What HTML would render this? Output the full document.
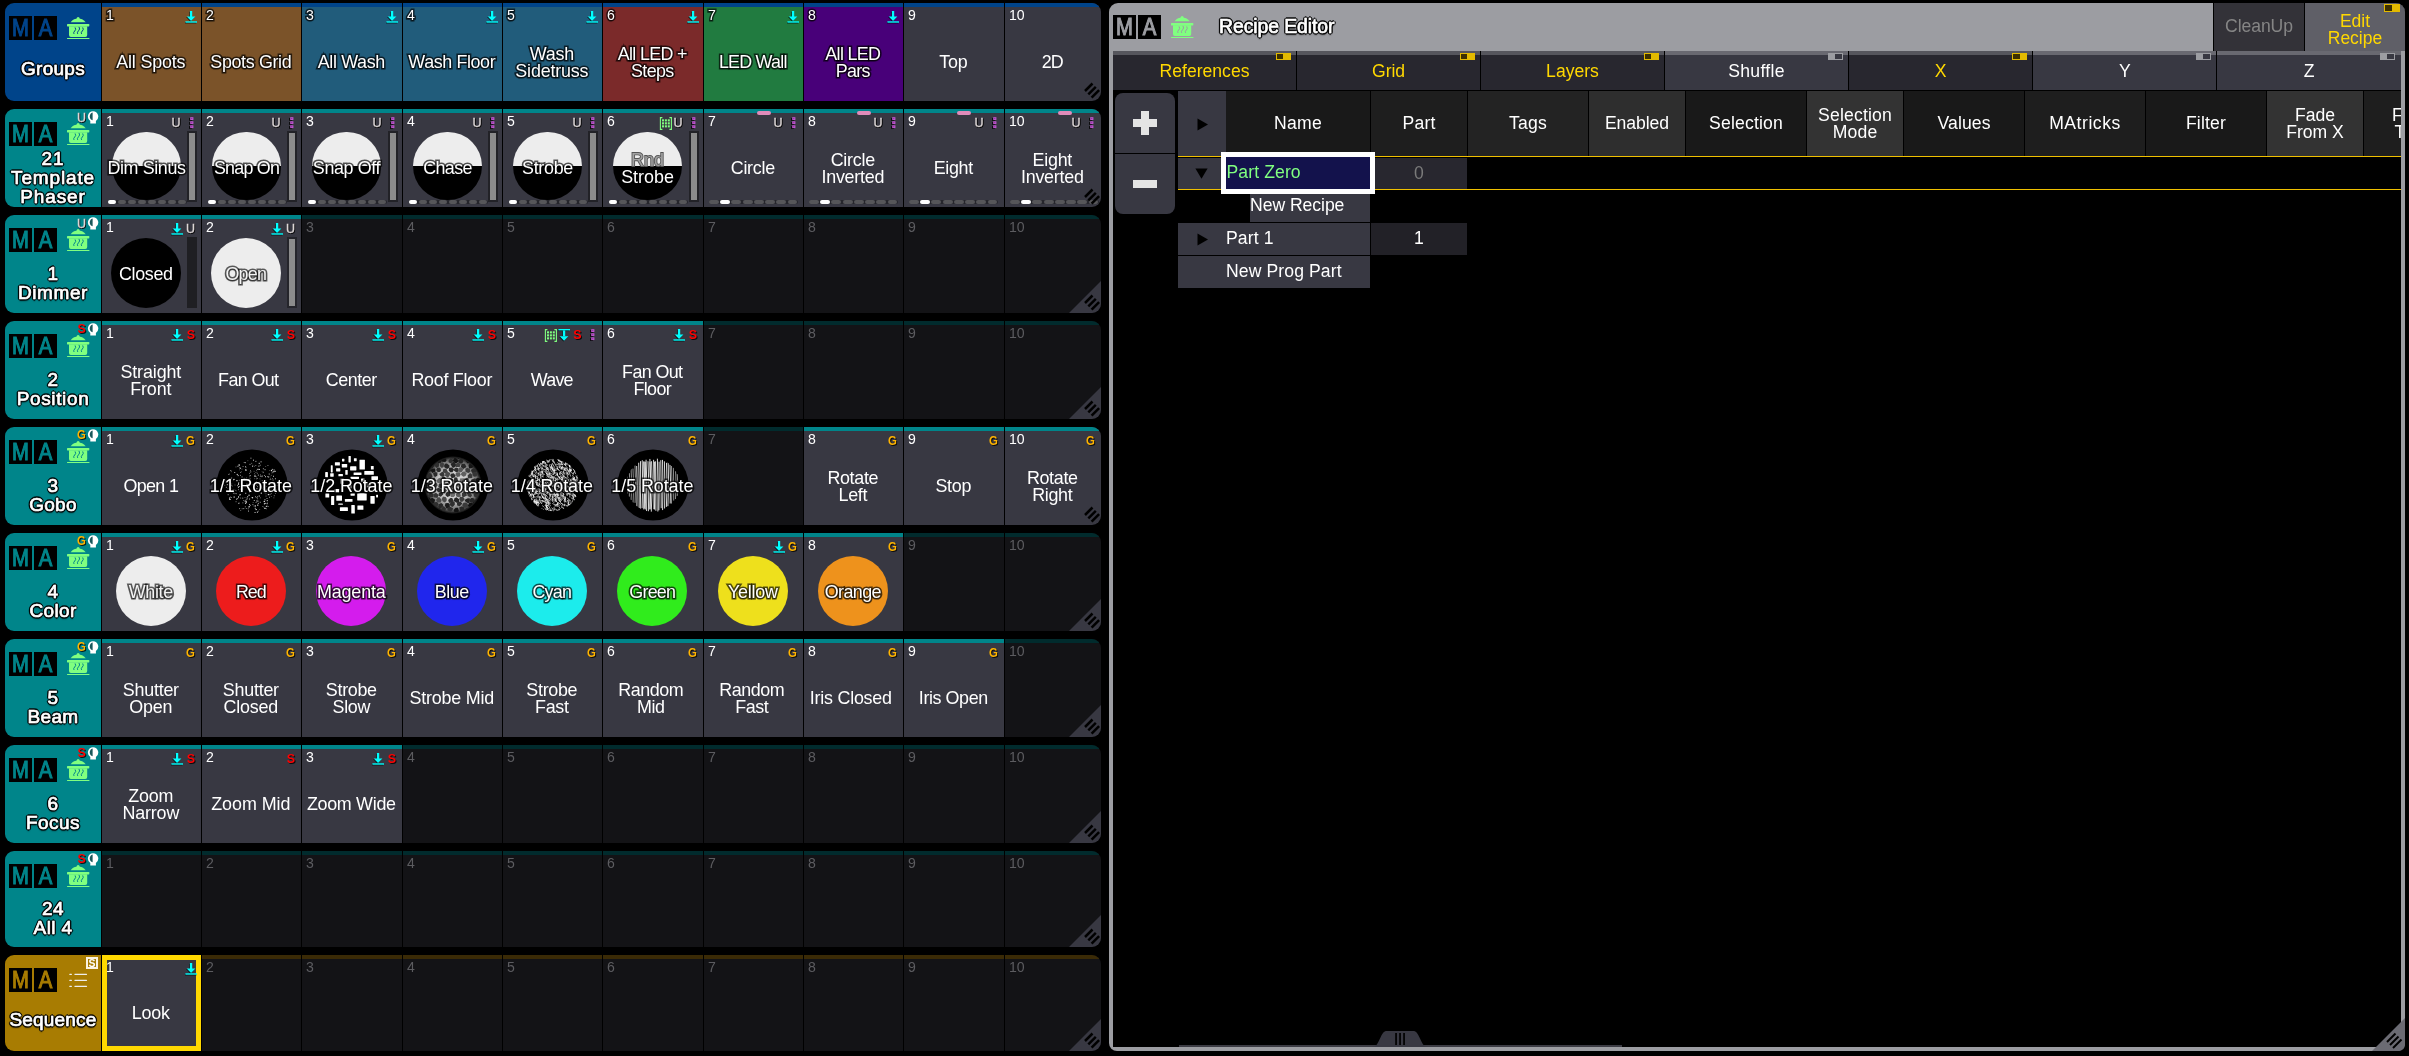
<!DOCTYPE html>
<html lang="en"><head><meta charset="utf-8"><title>grandMA3 - Recipe Editor</title>
<style>
*{margin:0;padding:0;box-sizing:border-box}
html,body{width:2409px;height:1056px;background:#000;overflow:hidden}
body{position:relative;font-family:"Liberation Sans",sans-serif;color:#fff}
#w{position:absolute;left:0;top:0;width:2409px;height:1056px;overflow:hidden;will-change:transform}
.a{position:absolute}
.t{position:absolute;left:5px;width:96px;border-radius:9px 0 0 9px}
.c{position:absolute;overflow:hidden}
.s{position:absolute;left:0;right:0;top:0;height:4px}
.n{position:absolute;left:4px;top:4.5px;font-size:15.3px;line-height:14px;white-space:nowrap;transform:scaleX(.92);transform-origin:0 0}
.ne{color:#5c5c60}
.o{paint-order:stroke fill;-webkit-text-stroke:3.2px rgba(0,0,0,.66);text-shadow:0 .5px 1.5px rgba(0,0,0,.6)}
.l{position:absolute;left:-10.7px;right:-9.3px;display:flex;align-items:center;justify-content:center;text-align:center;font-size:17.9px;line-height:17px;height:60px;white-space:pre;color:#fff}
.tl{position:absolute;left:0;width:96px;text-align:center;font-size:19px;line-height:19px;white-space:pre;color:#fff;-webkit-text-stroke:.7px #fff;text-shadow:-1.2px -1.2px .5px rgba(0,0,0,.8),1.2px -1.2px .5px rgba(0,0,0,.8),-1.2px 1.2px .5px rgba(0,0,0,.8),1.2px 1.2px .5px rgba(0,0,0,.8),0 1.7px .8px rgba(0,0,0,.75),-1.7px 0 .6px rgba(0,0,0,.7),1.7px 0 .6px rgba(0,0,0,.7),0 -1.6px .6px rgba(0,0,0,.7),0 2px 2px rgba(0,0,0,.4)}
.ma{position:absolute;left:4px;top:13px;width:48px;height:24px}
.ma b{position:absolute;top:0;width:23px;height:24px;background:#000;font-weight:400;font-size:23.6px;line-height:24.5px;text-align:center;overflow:hidden;-webkit-text-stroke:1.05px currentColor}
.ma b span{display:block;transform:scaleX(.86)}
.ma b+b{left:25px}
.ic{position:absolute;font-weight:700;font-size:12.5px;line-height:12px;white-space:nowrap}
.u{color:#dcd6d6;font-weight:400;font-size:12.5px;-webkit-text-stroke:.35px #dcd6d6;text-shadow:1px 1px .5px rgba(0,0,0,.8),0 1px .5px rgba(0,0,0,.6),1px 0 .5px rgba(0,0,0,.6)}
.g{color:#ffb400;font-weight:700;font-size:12.6px;transform:scaleX(.9);transform-origin:100% 50%;text-shadow:1px 1px 0 rgba(0,0,0,.8)}
.r{color:#ff0000;text-shadow:1px 1px 0 rgba(0,0,0,.8);font-size:12.5px}
.circ{position:absolute;border-radius:50%}
.fd{position:absolute;top:22px;width:10px;height:71px;background:#222227}
.fd i{position:absolute;left:1.6px;right:2px;top:2px;bottom:2px;background:#8c8c8c}
.st{position:absolute;top:90.6px;height:4.7px;display:flex;gap:1.3px;background:#26262c;border-radius:2.3px}
.st i{flex:1;background:#565659;border-radius:2px}
.st i.w{background:#fff}
.pill{position:absolute;left:53px;top:1.5px;width:14px;height:4.5px;border-radius:2.5px;background:#e08cba}
.hd{position:absolute;top:91px;height:65px;display:flex;align-items:center;justify-content:center;text-align:center;font-size:17.6px;line-height:17px;white-space:pre;color:#fff}
.tb{position:absolute;top:51px;height:39px;width:183px;font-size:17.6px;line-height:33.6px;padding-top:4px;text-align:center}
.tb:before{content:"";position:absolute;left:0;right:0;top:0;height:4px}
.tb.on{background:#28272f;color:#ffd800}
.tb.on:before{background:#56565d}
.tb.off{background:#383842;color:#fff}
.tb.off:before{background:#696971}
.tg{position:absolute;width:15.6px;height:7.8px;border:1.2px solid #e3ba00;background:linear-gradient(90deg,#3d3000 0 50%,#e3ba00 50% 100%)}
.tg.x{border-color:#9c9da2;background:linear-gradient(90deg,#9c9da2 0 50%,#383842 50% 100%)}
.rw{position:absolute;height:32px;font-size:17.6px;line-height:31px;white-space:nowrap;color:#fff}
</style></head>
<body><div id="w">
<div class="t" style="top:3px;height:98px;background:#00448a"><div class="ma" style="left:4px;top:13px;color:#00448a"><b><span>M</span></b><b><span>A</span></b></div><svg class="a" style="left:62px;top:13.7px" width="22.5" height="22.5" viewBox="0 0 22.5 22.5"><g fill="#80ff80"><circle cx="11.1" cy="1.5" r="1.5"/><path d="M3.6 5.3 C5.5 2.6 8.5 1.6 11.1 1.6 C13.7 1.6 16.7 2.6 18.7 5.3 Z"/><rect x="0" y="7" width="22.3" height="2.4" rx=".6"/><path d="M2 9.3 H20.2 V18 Q20.2 19.9 18.3 19.9 H3.9 Q2 19.9 2 18 Z"/><rect x="0" y="20.9" width="22.5" height="1.6" rx=".5"/></g><g fill="none" stroke="#00448a" stroke-width="1" stroke-linecap="round"><path d="M8.3 10.8 q1.2 1.8 -.6 3.2 q-1.6 1.3 -.9 2.6"/><path d="M12.2 10.2 q1.3 1.9 -.7 3.6 q-1.7 1.4 -1 2.8"/><path d="M15.9 10.8 q1.2 1.8 -.6 3.2 q-1.6 1.3 -.9 2.6"/></g></svg><div class="tl" style="top:56.2px;letter-spacing:0.29px;">Groups</div></div>
<div class="c" style="left:102px;top:3px;width:99px;height:98px;background:#7b5329"><div class="s" style="background:#00448a"></div><div class="n o">1</div><svg class="a" style="right:3px;top:8px" width="13" height="13" viewBox="0 0 13 13"><g fill="#000" opacity=".75" transform="translate(-.6,.7)"><rect x="4.9" y="0" width="2.3" height="6"/><path d="M1.7 5.4H10.4L6.05 10.1Z"/><rect x=".4" y="10.3" width="11.6" height="1.4"/></g><g fill="#00ffff"><rect x="4.9" y="0" width="2.3" height="6"/><path d="M1.7 5.4H10.4L6.05 10.1Z"/><rect x=".4" y="10.3" width="11.6" height="1.4"/></g></svg><div class="l o" style="top:29px;letter-spacing:-0.18px;">All Spots</div></div>
<div class="c" style="left:202px;top:3px;width:99px;height:98px;background:#7b5329"><div class="s" style="background:#00448a"></div><div class="n o">2</div><div class="l o" style="top:29px;letter-spacing:-0.36px;">Spots Grid</div></div>
<div class="c" style="left:302px;top:3px;width:100px;height:98px;background:#215c7b"><div class="s" style="background:#00448a"></div><div class="n o">3</div><svg class="a" style="right:3px;top:8px" width="13" height="13" viewBox="0 0 13 13"><g fill="#000" opacity=".75" transform="translate(-.6,.7)"><rect x="4.9" y="0" width="2.3" height="6"/><path d="M1.7 5.4H10.4L6.05 10.1Z"/><rect x=".4" y="10.3" width="11.6" height="1.4"/></g><g fill="#00ffff"><rect x="4.9" y="0" width="2.3" height="6"/><path d="M1.7 5.4H10.4L6.05 10.1Z"/><rect x=".4" y="10.3" width="11.6" height="1.4"/></g></svg><div class="l o" style="top:29px;letter-spacing:-0.35px;">All Wash</div></div>
<div class="c" style="left:403px;top:3px;width:99px;height:98px;background:#215c7b"><div class="s" style="background:#00448a"></div><div class="n o">4</div><svg class="a" style="right:3px;top:8px" width="13" height="13" viewBox="0 0 13 13"><g fill="#000" opacity=".75" transform="translate(-.6,.7)"><rect x="4.9" y="0" width="2.3" height="6"/><path d="M1.7 5.4H10.4L6.05 10.1Z"/><rect x=".4" y="10.3" width="11.6" height="1.4"/></g><g fill="#00ffff"><rect x="4.9" y="0" width="2.3" height="6"/><path d="M1.7 5.4H10.4L6.05 10.1Z"/><rect x=".4" y="10.3" width="11.6" height="1.4"/></g></svg><div class="l o" style="top:29px;letter-spacing:-0.39px;">Wash Floor</div></div>
<div class="c" style="left:503px;top:3px;width:99px;height:98px;background:#215c7b"><div class="s" style="background:#00448a"></div><div class="n o">5</div><svg class="a" style="right:3px;top:8px" width="13" height="13" viewBox="0 0 13 13"><g fill="#000" opacity=".75" transform="translate(-.6,.7)"><rect x="4.9" y="0" width="2.3" height="6"/><path d="M1.7 5.4H10.4L6.05 10.1Z"/><rect x=".4" y="10.3" width="11.6" height="1.4"/></g><g fill="#00ffff"><rect x="4.9" y="0" width="2.3" height="6"/><path d="M1.7 5.4H10.4L6.05 10.1Z"/><rect x=".4" y="10.3" width="11.6" height="1.4"/></g></svg><div class="l o" style="top:29px;padding-top:1.8px;letter-spacing:-0.19px;">Wash
Sidetruss</div></div>
<div class="c" style="left:603px;top:3px;width:100px;height:98px;background:#7b2a2a"><div class="s" style="background:#00448a"></div><div class="n o">6</div><svg class="a" style="right:3px;top:8px" width="13" height="13" viewBox="0 0 13 13"><g fill="#000" opacity=".75" transform="translate(-.6,.7)"><rect x="4.9" y="0" width="2.3" height="6"/><path d="M1.7 5.4H10.4L6.05 10.1Z"/><rect x=".4" y="10.3" width="11.6" height="1.4"/></g><g fill="#00ffff"><rect x="4.9" y="0" width="2.3" height="6"/><path d="M1.7 5.4H10.4L6.05 10.1Z"/><rect x=".4" y="10.3" width="11.6" height="1.4"/></g></svg><div class="l o" style="top:29px;padding-top:1.8px;letter-spacing:-0.66px;">All LED +
Steps</div></div>
<div class="c" style="left:704px;top:3px;width:99px;height:98px;background:#217b40"><div class="s" style="background:#00448a"></div><div class="n o">7</div><svg class="a" style="right:3px;top:8px" width="13" height="13" viewBox="0 0 13 13"><g fill="#000" opacity=".75" transform="translate(-.6,.7)"><rect x="4.9" y="0" width="2.3" height="6"/><path d="M1.7 5.4H10.4L6.05 10.1Z"/><rect x=".4" y="10.3" width="11.6" height="1.4"/></g><g fill="#00ffff"><rect x="4.9" y="0" width="2.3" height="6"/><path d="M1.7 5.4H10.4L6.05 10.1Z"/><rect x=".4" y="10.3" width="11.6" height="1.4"/></g></svg><div class="l o" style="top:29px;letter-spacing:-0.76px;">LED Wall</div></div>
<div class="c" style="left:804px;top:3px;width:99px;height:98px;background:#480079"><div class="s" style="background:#00448a"></div><div class="n o">8</div><svg class="a" style="right:3px;top:8px" width="13" height="13" viewBox="0 0 13 13"><g fill="#000" opacity=".75" transform="translate(-.6,.7)"><rect x="4.9" y="0" width="2.3" height="6"/><path d="M1.7 5.4H10.4L6.05 10.1Z"/><rect x=".4" y="10.3" width="11.6" height="1.4"/></g><g fill="#00ffff"><rect x="4.9" y="0" width="2.3" height="6"/><path d="M1.7 5.4H10.4L6.05 10.1Z"/><rect x=".4" y="10.3" width="11.6" height="1.4"/></g></svg><div class="l o" style="top:29px;padding-top:1.8px;letter-spacing:-0.68px;">All LED
Pars</div></div>
<div class="c" style="left:904px;top:3px;width:100px;height:98px;background:#383842"><div class="s" style="background:#00448a"></div><div class="n">9</div><div class="l" style="top:29px;letter-spacing:-0.23px;">Top</div></div>
<div class="c" style="left:1005px;top:3px;width:96px;height:98px;background:#383842;border-radius:0 9px 9px 0"><div class="s" style="background:#00448a"></div><div class="n">10</div><div class="l" style="top:29px;letter-spacing:-0.81px;">2D</div><svg class="a" style="right:0;bottom:0" width="32" height="32" viewBox="0 0 32 32"><g stroke="#000" stroke-width="2.5"><path d="M16 22L23.5 14.5"/><path d="M19.3 25.3L26.8 17.8"/><path d="M22.6 28.6L30.1 21.1"/></g></svg></div>
<div class="t" style="top:109px;height:98px;background:#00858a"><div class="ma" style="left:4px;top:13px;color:#00858a"><b><span>M</span></b><b><span>A</span></b></div><svg class="a" style="left:62px;top:13.7px" width="22.5" height="22.5" viewBox="0 0 22.5 22.5"><g fill="#80ff80"><circle cx="11.1" cy="1.5" r="1.5"/><path d="M3.6 5.3 C5.5 2.6 8.5 1.6 11.1 1.6 C13.7 1.6 16.7 2.6 18.7 5.3 Z"/><rect x="0" y="7" width="22.3" height="2.4" rx=".6"/><path d="M2 9.3 H20.2 V18 Q20.2 19.9 18.3 19.9 H3.9 Q2 19.9 2 18 Z"/><rect x="0" y="20.9" width="22.5" height="1.6" rx=".5"/></g><g fill="none" stroke="#00858a" stroke-width="1" stroke-linecap="round"><path d="M8.3 10.8 q1.2 1.8 -.6 3.2 q-1.6 1.3 -.9 2.6"/><path d="M12.2 10.2 q1.3 1.9 -.7 3.6 q-1.7 1.4 -1 2.8"/><path d="M15.9 10.8 q1.2 1.8 -.6 3.2 q-1.6 1.3 -.9 2.6"/></g></svg><div class="ic u" style="left:72px;top:2.5px">U</div><svg class="a" style="left:81.6px;top:1.6px" width="12" height="13" viewBox="0 0 12 13"><path d="M6 .2A5.3 5.3 0 0 1 8.9 9.9V12.6H3.3V9.9A5.3 5.3 0 0 1 6 .2Z" fill="#fff"/><path d="M5.6 1.5A4.1 4.1 0 0 0 5.6 9.3Z" fill="rgba(0,70,73,.9)"/></svg><div class="tl" style="top:39.9px;letter-spacing:0.85px;">21
Template
Phaser</div></div>
<div class="c" style="left:102px;top:109px;width:99px;height:98px;background:#383842"><div class="s" style="background:#00858a"></div><div class="n">1</div><div class="circ" style="left:10.4px;top:22.6px;width:68.2px;height:68.2px;background:linear-gradient(#ededed 0 50.6%,#000 50.6% 100%)"></div><div class="fd" style="right:4px;width:9.6px"><i></i></div><div class="st" style="left:5.5px;width:79px"><i class="w"></i><i></i><i></i><i></i><i></i><i></i><i></i><i></i></div><svg class="a" style="right:7px;top:8px" width="5" height="12" viewBox="0 0 5 12"><rect x="0" y="1.00" width="3.2" height="2.8" fill="#000" opacity=".8"/><rect x="1.2" y="0.20" width="3.2" height="2.8" fill="#c455d4"/><rect x="2.3" y="1.20" width="1" height=".9" fill="#6a2e74"/><rect x="0" y="5.05" width="3.2" height="2.8" fill="#000" opacity=".8"/><rect x="1.2" y="4.25" width="3.2" height="2.8" fill="#c455d4"/><rect x="2.3" y="5.25" width="1" height=".9" fill="#6a2e74"/><rect x="0" y="9.10" width="3.2" height="2.8" fill="#000" opacity=".8"/><rect x="1.2" y="8.30" width="3.2" height="2.8" fill="#c455d4"/><rect x="2.3" y="9.30" width="1" height=".9" fill="#6a2e74"/></svg><div class="ic u" style="right:20.5px;top:7.8px">U</div><div class="l o" style="top:29px;letter-spacing:-0.38px;left:-5.5px;right:auto;width:100px">Dim Sinus</div></div>
<div class="c" style="left:202px;top:109px;width:99px;height:98px;background:#383842"><div class="s" style="background:#00858a"></div><div class="n">2</div><div class="circ" style="left:10.4px;top:22.6px;width:68.2px;height:68.2px;background:linear-gradient(#ededed 0 50.6%,#000 50.6% 100%)"></div><div class="fd" style="right:4px;width:9.6px"><i></i></div><div class="st" style="left:5.5px;width:79px"><i class="w"></i><i></i><i></i><i></i><i></i><i></i><i></i><i></i></div><svg class="a" style="right:7px;top:8px" width="5" height="12" viewBox="0 0 5 12"><rect x="0" y="1.00" width="3.2" height="2.8" fill="#000" opacity=".8"/><rect x="1.2" y="0.20" width="3.2" height="2.8" fill="#c455d4"/><rect x="2.3" y="1.20" width="1" height=".9" fill="#6a2e74"/><rect x="0" y="5.05" width="3.2" height="2.8" fill="#000" opacity=".8"/><rect x="1.2" y="4.25" width="3.2" height="2.8" fill="#c455d4"/><rect x="2.3" y="5.25" width="1" height=".9" fill="#6a2e74"/><rect x="0" y="9.10" width="3.2" height="2.8" fill="#000" opacity=".8"/><rect x="1.2" y="8.30" width="3.2" height="2.8" fill="#c455d4"/><rect x="2.3" y="9.30" width="1" height=".9" fill="#6a2e74"/></svg><div class="ic u" style="right:20.5px;top:7.8px">U</div><div class="l o" style="top:29px;letter-spacing:-0.77px;left:-5.5px;right:auto;width:100px">Snap On</div></div>
<div class="c" style="left:302px;top:109px;width:100px;height:98px;background:#383842"><div class="s" style="background:#00858a"></div><div class="n">3</div><div class="circ" style="left:10.4px;top:22.6px;width:68.2px;height:68.2px;background:linear-gradient(#ededed 0 50.6%,#000 50.6% 100%)"></div><div class="fd" style="right:4px;width:9.6px"><i></i></div><div class="st" style="left:5.5px;width:79px"><i class="w"></i><i></i><i></i><i></i><i></i><i></i><i></i><i></i></div><svg class="a" style="right:7px;top:8px" width="5" height="12" viewBox="0 0 5 12"><rect x="0" y="1.00" width="3.2" height="2.8" fill="#000" opacity=".8"/><rect x="1.2" y="0.20" width="3.2" height="2.8" fill="#c455d4"/><rect x="2.3" y="1.20" width="1" height=".9" fill="#6a2e74"/><rect x="0" y="5.05" width="3.2" height="2.8" fill="#000" opacity=".8"/><rect x="1.2" y="4.25" width="3.2" height="2.8" fill="#c455d4"/><rect x="2.3" y="5.25" width="1" height=".9" fill="#6a2e74"/><rect x="0" y="9.10" width="3.2" height="2.8" fill="#000" opacity=".8"/><rect x="1.2" y="8.30" width="3.2" height="2.8" fill="#c455d4"/><rect x="2.3" y="9.30" width="1" height=".9" fill="#6a2e74"/></svg><div class="ic u" style="right:20.5px;top:7.8px">U</div><div class="l o" style="top:29px;letter-spacing:-0.37px;left:-5.5px;right:auto;width:100px">Snap Off</div></div>
<div class="c" style="left:403px;top:109px;width:99px;height:98px;background:#383842"><div class="s" style="background:#00858a"></div><div class="n">4</div><div class="circ" style="left:10.4px;top:22.6px;width:68.2px;height:68.2px;background:linear-gradient(#ededed 0 50.6%,#000 50.6% 100%)"></div><div class="fd" style="right:4px;width:9.6px"><i></i></div><div class="st" style="left:5.5px;width:79px"><i class="w"></i><i></i><i></i><i></i><i></i><i></i><i></i><i></i></div><svg class="a" style="right:7px;top:8px" width="5" height="12" viewBox="0 0 5 12"><rect x="0" y="1.00" width="3.2" height="2.8" fill="#000" opacity=".8"/><rect x="1.2" y="0.20" width="3.2" height="2.8" fill="#c455d4"/><rect x="2.3" y="1.20" width="1" height=".9" fill="#6a2e74"/><rect x="0" y="5.05" width="3.2" height="2.8" fill="#000" opacity=".8"/><rect x="1.2" y="4.25" width="3.2" height="2.8" fill="#c455d4"/><rect x="2.3" y="5.25" width="1" height=".9" fill="#6a2e74"/><rect x="0" y="9.10" width="3.2" height="2.8" fill="#000" opacity=".8"/><rect x="1.2" y="8.30" width="3.2" height="2.8" fill="#c455d4"/><rect x="2.3" y="9.30" width="1" height=".9" fill="#6a2e74"/></svg><div class="ic u" style="right:20.5px;top:7.8px">U</div><div class="l o" style="top:29px;letter-spacing:-0.60px;left:-5.5px;right:auto;width:100px">Chase</div></div>
<div class="c" style="left:503px;top:109px;width:99px;height:98px;background:#383842"><div class="s" style="background:#00858a"></div><div class="n">5</div><div class="circ" style="left:10.4px;top:22.6px;width:68.2px;height:68.2px;background:linear-gradient(#ededed 0 50.6%,#000 50.6% 100%)"></div><div class="fd" style="right:4px;width:9.6px"><i></i></div><div class="st" style="left:5.5px;width:79px"><i class="w"></i><i></i><i></i><i></i><i></i><i></i><i></i><i></i></div><svg class="a" style="right:7px;top:8px" width="5" height="12" viewBox="0 0 5 12"><rect x="0" y="1.00" width="3.2" height="2.8" fill="#000" opacity=".8"/><rect x="1.2" y="0.20" width="3.2" height="2.8" fill="#c455d4"/><rect x="2.3" y="1.20" width="1" height=".9" fill="#6a2e74"/><rect x="0" y="5.05" width="3.2" height="2.8" fill="#000" opacity=".8"/><rect x="1.2" y="4.25" width="3.2" height="2.8" fill="#c455d4"/><rect x="2.3" y="5.25" width="1" height=".9" fill="#6a2e74"/><rect x="0" y="9.10" width="3.2" height="2.8" fill="#000" opacity=".8"/><rect x="1.2" y="8.30" width="3.2" height="2.8" fill="#c455d4"/><rect x="2.3" y="9.30" width="1" height=".9" fill="#6a2e74"/></svg><div class="ic u" style="right:20.5px;top:7.8px">U</div><div class="l o" style="top:29px;letter-spacing:-0.30px;left:-5.5px;right:auto;width:100px">Strobe</div></div>
<div class="c" style="left:603px;top:109px;width:100px;height:98px;background:#383842"><div class="s" style="background:#00858a"></div><div class="n">6</div><div class="circ" style="left:10.4px;top:22.6px;width:68.2px;height:68.2px;background:linear-gradient(#ededed 0 50.6%,#000 50.6% 100%)"></div><div class="fd" style="right:4px;width:9.6px"><i></i></div><div class="st" style="left:5.5px;width:79px"><i class="w"></i><i></i><i></i><i></i><i></i><i></i><i></i><i></i></div><svg class="a" style="right:7px;top:8px" width="5" height="12" viewBox="0 0 5 12"><rect x="0" y="1.00" width="3.2" height="2.8" fill="#000" opacity=".8"/><rect x="1.2" y="0.20" width="3.2" height="2.8" fill="#c455d4"/><rect x="2.3" y="1.20" width="1" height=".9" fill="#6a2e74"/><rect x="0" y="5.05" width="3.2" height="2.8" fill="#000" opacity=".8"/><rect x="1.2" y="4.25" width="3.2" height="2.8" fill="#c455d4"/><rect x="2.3" y="5.25" width="1" height=".9" fill="#6a2e74"/><rect x="0" y="9.10" width="3.2" height="2.8" fill="#000" opacity=".8"/><rect x="1.2" y="8.30" width="3.2" height="2.8" fill="#c455d4"/><rect x="2.3" y="9.30" width="1" height=".9" fill="#6a2e74"/></svg><div class="ic u" style="right:20.5px;top:7.8px">U</div><svg class="a" style="right:31.5px;top:7.5px" width="13" height="13" viewBox="0 0 13 13"><g fill="none" stroke="#80ff80" stroke-width="1.1"><path d="M3.4 .6H1.4V12.4H3.4"/><path d="M10.4 .6H12.4V12.4H10.4"/></g><g fill="#80ff80"><rect x="3.0" y="2.3" width="2.0" height="2.1"/><rect x="5.9" y="2.3" width="2.0" height="2.1"/><rect x="8.8" y="2.3" width="2.0" height="2.1"/><rect x="3.0" y="5.3" width="2.0" height="2.1"/><rect x="5.9" y="5.3" width="2.0" height="2.1"/><rect x="8.8" y="5.3" width="2.0" height="2.1"/><rect x="3.0" y="8.3" width="2.0" height="2.1"/><rect x="5.9" y="8.3" width="2.0" height="2.1"/><rect x="8.8" y="8.3" width="2.0" height="2.1"/></g></svg><div class="l" style="top:29px;padding-top:1.8px;left:-5.5px;right:auto;width:100px"><span><span style="color:#a2a2a2;paint-order:stroke fill;-webkit-text-stroke:1.8px #555">Rnd</span>
Strobe</span></div></div>
<div class="c" style="left:704px;top:109px;width:99px;height:98px;background:#383842"><div class="s" style="background:#00858a"></div><div class="n">7</div><div class="pill"></div><div class="st" style="left:5px;width:88.5px"><i></i><i class="w"></i><i></i><i></i><i></i><i></i><i></i><i></i></div><svg class="a" style="right:7px;top:8px" width="5" height="12" viewBox="0 0 5 12"><rect x="0" y="1.00" width="3.2" height="2.8" fill="#000" opacity=".8"/><rect x="1.2" y="0.20" width="3.2" height="2.8" fill="#c455d4"/><rect x="2.3" y="1.20" width="1" height=".9" fill="#6a2e74"/><rect x="0" y="5.05" width="3.2" height="2.8" fill="#000" opacity=".8"/><rect x="1.2" y="4.25" width="3.2" height="2.8" fill="#c455d4"/><rect x="2.3" y="5.25" width="1" height=".9" fill="#6a2e74"/><rect x="0" y="9.10" width="3.2" height="2.8" fill="#000" opacity=".8"/><rect x="1.2" y="8.30" width="3.2" height="2.8" fill="#c455d4"/><rect x="2.3" y="9.30" width="1" height=".9" fill="#6a2e74"/></svg><div class="ic u" style="right:20.5px;top:7.8px">U</div><div class="l" style="top:29px;letter-spacing:-0.27px;">Circle</div></div>
<div class="c" style="left:804px;top:109px;width:99px;height:98px;background:#383842"><div class="s" style="background:#00858a"></div><div class="n">8</div><div class="pill"></div><div class="st" style="left:5px;width:88.5px"><i></i><i class="w"></i><i></i><i></i><i></i><i></i><i></i><i></i></div><svg class="a" style="right:7px;top:8px" width="5" height="12" viewBox="0 0 5 12"><rect x="0" y="1.00" width="3.2" height="2.8" fill="#000" opacity=".8"/><rect x="1.2" y="0.20" width="3.2" height="2.8" fill="#c455d4"/><rect x="2.3" y="1.20" width="1" height=".9" fill="#6a2e74"/><rect x="0" y="5.05" width="3.2" height="2.8" fill="#000" opacity=".8"/><rect x="1.2" y="4.25" width="3.2" height="2.8" fill="#c455d4"/><rect x="2.3" y="5.25" width="1" height=".9" fill="#6a2e74"/><rect x="0" y="9.10" width="3.2" height="2.8" fill="#000" opacity=".8"/><rect x="1.2" y="8.30" width="3.2" height="2.8" fill="#c455d4"/><rect x="2.3" y="9.30" width="1" height=".9" fill="#6a2e74"/></svg><div class="ic u" style="right:20.5px;top:7.8px">U</div><div class="l" style="top:29px;padding-top:1.8px;letter-spacing:-0.24px;">Circle
Inverted</div></div>
<div class="c" style="left:904px;top:109px;width:100px;height:98px;background:#383842"><div class="s" style="background:#00858a"></div><div class="n">9</div><div class="pill"></div><div class="st" style="left:5px;width:88.5px"><i></i><i class="w"></i><i></i><i></i><i></i><i></i><i></i><i></i></div><svg class="a" style="right:7px;top:8px" width="5" height="12" viewBox="0 0 5 12"><rect x="0" y="1.00" width="3.2" height="2.8" fill="#000" opacity=".8"/><rect x="1.2" y="0.20" width="3.2" height="2.8" fill="#c455d4"/><rect x="2.3" y="1.20" width="1" height=".9" fill="#6a2e74"/><rect x="0" y="5.05" width="3.2" height="2.8" fill="#000" opacity=".8"/><rect x="1.2" y="4.25" width="3.2" height="2.8" fill="#c455d4"/><rect x="2.3" y="5.25" width="1" height=".9" fill="#6a2e74"/><rect x="0" y="9.10" width="3.2" height="2.8" fill="#000" opacity=".8"/><rect x="1.2" y="8.30" width="3.2" height="2.8" fill="#c455d4"/><rect x="2.3" y="9.30" width="1" height=".9" fill="#6a2e74"/></svg><div class="ic u" style="right:20.5px;top:7.8px">U</div><div class="l" style="top:29px;letter-spacing:-0.31px;">Eight</div></div>
<div class="c" style="left:1005px;top:109px;width:96px;height:98px;background:#383842;border-radius:0 9px 9px 0"><div class="s" style="background:#00858a"></div><div class="n">10</div><div class="pill"></div><div class="st" style="left:5px;width:88.5px"><i></i><i class="w"></i><i></i><i></i><i></i><i></i><i></i><i></i></div><svg class="a" style="right:7px;top:8px" width="5" height="12" viewBox="0 0 5 12"><rect x="0" y="1.00" width="3.2" height="2.8" fill="#000" opacity=".8"/><rect x="1.2" y="0.20" width="3.2" height="2.8" fill="#c455d4"/><rect x="2.3" y="1.20" width="1" height=".9" fill="#6a2e74"/><rect x="0" y="5.05" width="3.2" height="2.8" fill="#000" opacity=".8"/><rect x="1.2" y="4.25" width="3.2" height="2.8" fill="#c455d4"/><rect x="2.3" y="5.25" width="1" height=".9" fill="#6a2e74"/><rect x="0" y="9.10" width="3.2" height="2.8" fill="#000" opacity=".8"/><rect x="1.2" y="8.30" width="3.2" height="2.8" fill="#c455d4"/><rect x="2.3" y="9.30" width="1" height=".9" fill="#6a2e74"/></svg><div class="ic u" style="right:20.5px;top:7.8px">U</div><div class="l" style="top:29px;padding-top:1.8px;letter-spacing:-0.24px;">Eight
Inverted</div><svg class="a" style="right:0;bottom:0" width="32" height="32" viewBox="0 0 32 32"><g stroke="#000" stroke-width="2.5"><path d="M16 22L23.5 14.5"/><path d="M19.3 25.3L26.8 17.8"/><path d="M22.6 28.6L30.1 21.1"/></g></svg></div>
<div class="t" style="top:215px;height:98px;background:#00858a"><div class="ma" style="left:4px;top:13px;color:#00858a"><b><span>M</span></b><b><span>A</span></b></div><svg class="a" style="left:62px;top:13.7px" width="22.5" height="22.5" viewBox="0 0 22.5 22.5"><g fill="#80ff80"><circle cx="11.1" cy="1.5" r="1.5"/><path d="M3.6 5.3 C5.5 2.6 8.5 1.6 11.1 1.6 C13.7 1.6 16.7 2.6 18.7 5.3 Z"/><rect x="0" y="7" width="22.3" height="2.4" rx=".6"/><path d="M2 9.3 H20.2 V18 Q20.2 19.9 18.3 19.9 H3.9 Q2 19.9 2 18 Z"/><rect x="0" y="20.9" width="22.5" height="1.6" rx=".5"/></g><g fill="none" stroke="#00858a" stroke-width="1" stroke-linecap="round"><path d="M8.3 10.8 q1.2 1.8 -.6 3.2 q-1.6 1.3 -.9 2.6"/><path d="M12.2 10.2 q1.3 1.9 -.7 3.6 q-1.7 1.4 -1 2.8"/><path d="M15.9 10.8 q1.2 1.8 -.6 3.2 q-1.6 1.3 -.9 2.6"/></g></svg><div class="ic u" style="left:72px;top:2.5px">U</div><svg class="a" style="left:81.6px;top:1.6px" width="12" height="13" viewBox="0 0 12 13"><path d="M6 .2A5.3 5.3 0 0 1 8.9 9.9V12.6H3.3V9.9A5.3 5.3 0 0 1 6 .2Z" fill="#fff"/><path d="M5.6 1.5A4.1 4.1 0 0 0 5.6 9.3Z" fill="rgba(0,70,73,.9)"/></svg><div class="tl" style="top:48.9px;letter-spacing:0.59px;">1
Dimmer</div></div>
<div class="c" style="left:102px;top:215px;width:99px;height:98px;background:#383842"><div class="s" style="background:#00858a"></div><div class="n">1</div><div class="circ" style="left:8.8px;top:22.6px;width:70px;height:70px;background:#000"></div><div class="fd" style="right:4px;width:10px;top:22px;height:71px;background:#1f1f23"></div><div class="ic u" style="right:6px;top:7.8px">U</div><svg class="a" style="right:17px;top:8px" width="13" height="13" viewBox="0 0 13 13"><g fill="#000" opacity=".75" transform="translate(-.6,.7)"><rect x="4.9" y="0" width="2.3" height="6"/><path d="M1.7 5.4H10.4L6.05 10.1Z"/><rect x=".4" y="10.3" width="11.6" height="1.4"/></g><g fill="#00ffff"><rect x="4.9" y="0" width="2.3" height="6"/><path d="M1.7 5.4H10.4L6.05 10.1Z"/><rect x=".4" y="10.3" width="11.6" height="1.4"/></g></svg><div class="l" style="top:29px;letter-spacing:-0.34px;left:-6.2px;right:auto;width:100px">Closed</div></div>
<div class="c" style="left:202px;top:215px;width:99px;height:98px;background:#383842"><div class="s" style="background:#00858a"></div><div class="n">2</div><div class="circ" style="left:8.8px;top:22.6px;width:70px;height:70px;background:#ededed"></div><div class="fd" style="right:4px;width:10px;top:22px;height:71px;background:#25252b"><i style="left:2px;right:2px"></i></div><div class="ic u" style="right:6px;top:7.8px">U</div><svg class="a" style="right:17px;top:8px" width="13" height="13" viewBox="0 0 13 13"><g fill="#000" opacity=".75" transform="translate(-.6,.7)"><rect x="4.9" y="0" width="2.3" height="6"/><path d="M1.7 5.4H10.4L6.05 10.1Z"/><rect x=".4" y="10.3" width="11.6" height="1.4"/></g><g fill="#00ffff"><rect x="4.9" y="0" width="2.3" height="6"/><path d="M1.7 5.4H10.4L6.05 10.1Z"/><rect x=".4" y="10.3" width="11.6" height="1.4"/></g></svg><div class="l o" style="top:29px;letter-spacing:-0.78px;left:-6.2px;right:auto;width:100px;color:#f4f4f4;-webkit-text-stroke-color:rgba(0,0,0,.62)">Open</div></div>
<div class="c" style="left:302px;top:215px;width:100px;height:98px;background:#131316"><div class="s" style="background:#012b2d"></div><div class="n ne">3</div></div>
<div class="c" style="left:403px;top:215px;width:99px;height:98px;background:#131316"><div class="s" style="background:#012b2d"></div><div class="n ne">4</div></div>
<div class="c" style="left:503px;top:215px;width:99px;height:98px;background:#131316"><div class="s" style="background:#012b2d"></div><div class="n ne">5</div></div>
<div class="c" style="left:603px;top:215px;width:100px;height:98px;background:#131316"><div class="s" style="background:#012b2d"></div><div class="n ne">6</div></div>
<div class="c" style="left:704px;top:215px;width:99px;height:98px;background:#131316"><div class="s" style="background:#012b2d"></div><div class="n ne">7</div></div>
<div class="c" style="left:804px;top:215px;width:99px;height:98px;background:#131316"><div class="s" style="background:#012b2d"></div><div class="n ne">8</div></div>
<div class="c" style="left:904px;top:215px;width:100px;height:98px;background:#131316"><div class="s" style="background:#012b2d"></div><div class="n ne">9</div></div>
<div class="c" style="left:1005px;top:215px;width:96px;height:98px;background:#131316;border-radius:0 9px 9px 0"><div class="s" style="background:#012b2d"></div><div class="n ne">10</div><svg class="a" style="right:0;bottom:0" width="32" height="32" viewBox="0 0 32 32"><path d="M32 0V32H0Z" fill="#383842"/><g stroke="#000" stroke-width="2.5"><path d="M16 22L23.5 14.5"/><path d="M19.3 25.3L26.8 17.8"/><path d="M22.6 28.6L30.1 21.1"/></g></svg></div>
<div class="t" style="top:321px;height:98px;background:#00858a"><div class="ma" style="left:4px;top:13px;color:#00858a"><b><span>M</span></b><b><span>A</span></b></div><svg class="a" style="left:62px;top:13.7px" width="22.5" height="22.5" viewBox="0 0 22.5 22.5"><g fill="#80ff80"><circle cx="11.1" cy="1.5" r="1.5"/><path d="M3.6 5.3 C5.5 2.6 8.5 1.6 11.1 1.6 C13.7 1.6 16.7 2.6 18.7 5.3 Z"/><rect x="0" y="7" width="22.3" height="2.4" rx=".6"/><path d="M2 9.3 H20.2 V18 Q20.2 19.9 18.3 19.9 H3.9 Q2 19.9 2 18 Z"/><rect x="0" y="20.9" width="22.5" height="1.6" rx=".5"/></g><g fill="none" stroke="#00858a" stroke-width="1" stroke-linecap="round"><path d="M8.3 10.8 q1.2 1.8 -.6 3.2 q-1.6 1.3 -.9 2.6"/><path d="M12.2 10.2 q1.3 1.9 -.7 3.6 q-1.7 1.4 -1 2.8"/><path d="M15.9 10.8 q1.2 1.8 -.6 3.2 q-1.6 1.3 -.9 2.6"/></g></svg><div class="ic r" style="left:72.5px;top:2px">S</div><svg class="a" style="left:81.6px;top:1.6px" width="12" height="13" viewBox="0 0 12 13"><path d="M6 .2A5.3 5.3 0 0 1 8.9 9.9V12.6H3.3V9.9A5.3 5.3 0 0 1 6 .2Z" fill="#fff"/><path d="M5.6 1.5A4.1 4.1 0 0 0 5.6 9.3Z" fill="rgba(0,70,73,.9)"/></svg><div class="tl" style="top:48.9px;letter-spacing:0.64px;">2
Position</div></div>
<div class="c" style="left:102px;top:321px;width:99px;height:98px;background:#383842"><div class="s" style="background:#00858a"></div><div class="n">1</div><div class="ic r" style="right:6px;top:8px">S</div><svg class="a" style="right:17px;top:8px" width="13" height="13" viewBox="0 0 13 13"><g fill="#000" opacity=".75" transform="translate(-.6,.7)"><rect x="4.9" y="0" width="2.3" height="6"/><path d="M1.7 5.4H10.4L6.05 10.1Z"/><rect x=".4" y="10.3" width="11.6" height="1.4"/></g><g fill="#00ffff"><rect x="4.9" y="0" width="2.3" height="6"/><path d="M1.7 5.4H10.4L6.05 10.1Z"/><rect x=".4" y="10.3" width="11.6" height="1.4"/></g></svg><div class="l" style="top:29px;padding-top:1.8px;letter-spacing:-0.11px;">Straight
Front</div></div>
<div class="c" style="left:202px;top:321px;width:99px;height:98px;background:#383842"><div class="s" style="background:#00858a"></div><div class="n">2</div><div class="ic r" style="right:6px;top:8px">S</div><svg class="a" style="right:17px;top:8px" width="13" height="13" viewBox="0 0 13 13"><g fill="#000" opacity=".75" transform="translate(-.6,.7)"><rect x="4.9" y="0" width="2.3" height="6"/><path d="M1.7 5.4H10.4L6.05 10.1Z"/><rect x=".4" y="10.3" width="11.6" height="1.4"/></g><g fill="#00ffff"><rect x="4.9" y="0" width="2.3" height="6"/><path d="M1.7 5.4H10.4L6.05 10.1Z"/><rect x=".4" y="10.3" width="11.6" height="1.4"/></g></svg><div class="l" style="top:29px;letter-spacing:-0.61px;left:-13.2px;right:-6.800000000000001px;">Fan Out</div></div>
<div class="c" style="left:302px;top:321px;width:100px;height:98px;background:#383842"><div class="s" style="background:#00858a"></div><div class="n">3</div><div class="ic r" style="right:6px;top:8px">S</div><svg class="a" style="right:17px;top:8px" width="13" height="13" viewBox="0 0 13 13"><g fill="#000" opacity=".75" transform="translate(-.6,.7)"><rect x="4.9" y="0" width="2.3" height="6"/><path d="M1.7 5.4H10.4L6.05 10.1Z"/><rect x=".4" y="10.3" width="11.6" height="1.4"/></g><g fill="#00ffff"><rect x="4.9" y="0" width="2.3" height="6"/><path d="M1.7 5.4H10.4L6.05 10.1Z"/><rect x=".4" y="10.3" width="11.6" height="1.4"/></g></svg><div class="l" style="top:29px;letter-spacing:-0.44px;">Center</div></div>
<div class="c" style="left:403px;top:321px;width:99px;height:98px;background:#383842"><div class="s" style="background:#00858a"></div><div class="n">4</div><div class="ic r" style="right:6px;top:8px">S</div><svg class="a" style="right:17px;top:8px" width="13" height="13" viewBox="0 0 13 13"><g fill="#000" opacity=".75" transform="translate(-.6,.7)"><rect x="4.9" y="0" width="2.3" height="6"/><path d="M1.7 5.4H10.4L6.05 10.1Z"/><rect x=".4" y="10.3" width="11.6" height="1.4"/></g><g fill="#00ffff"><rect x="4.9" y="0" width="2.3" height="6"/><path d="M1.7 5.4H10.4L6.05 10.1Z"/><rect x=".4" y="10.3" width="11.6" height="1.4"/></g></svg><div class="l" style="top:29px;letter-spacing:-0.29px;">Roof Floor</div></div>
<div class="c" style="left:503px;top:321px;width:99px;height:98px;background:#383842"><div class="s" style="background:#00858a"></div><div class="n">5</div><svg class="a" style="right:7px;top:8px" width="5" height="12" viewBox="0 0 5 12"><rect x="0" y="1.00" width="3.2" height="2.8" fill="#000" opacity=".8"/><rect x="1.2" y="0.20" width="3.2" height="2.8" fill="#c455d4"/><rect x="2.3" y="1.20" width="1" height=".9" fill="#6a2e74"/><rect x="0" y="5.05" width="3.2" height="2.8" fill="#000" opacity=".8"/><rect x="1.2" y="4.25" width="3.2" height="2.8" fill="#c455d4"/><rect x="2.3" y="5.25" width="1" height=".9" fill="#6a2e74"/><rect x="0" y="9.10" width="3.2" height="2.8" fill="#000" opacity=".8"/><rect x="1.2" y="8.30" width="3.2" height="2.8" fill="#c455d4"/><rect x="2.3" y="9.30" width="1" height=".9" fill="#6a2e74"/></svg><div class="ic r" style="right:20.5px;top:8px">S</div><svg class="a" style="right:31.5px;top:8px" width="13" height="13" viewBox="0 0 13 13"><g fill="#000" opacity=".75" transform="translate(-.6,.7)"><rect x=".4" y="0" width="11.6" height="1.4"/><rect x="4.9" y="1.4" width="2.3" height="6"/><path d="M1.7 7.2H10.4L6.05 11.8Z"/></g><g fill="#00ffff"><rect x=".4" y="0" width="11.6" height="1.4"/><rect x="4.9" y="1.4" width="2.3" height="6"/><path d="M1.7 7.2H10.4L6.05 11.8Z"/></g></svg><svg class="a" style="right:45.5px;top:7.5px" width="13" height="13" viewBox="0 0 13 13"><g fill="none" stroke="#80ff80" stroke-width="1.1"><path d="M3.4 .6H1.4V12.4H3.4"/><path d="M10.4 .6H12.4V12.4H10.4"/></g><g fill="#80ff80"><rect x="3.0" y="2.3" width="2.0" height="2.1"/><rect x="5.9" y="2.3" width="2.0" height="2.1"/><rect x="8.8" y="2.3" width="2.0" height="2.1"/><rect x="3.0" y="5.3" width="2.0" height="2.1"/><rect x="5.9" y="5.3" width="2.0" height="2.1"/><rect x="8.8" y="5.3" width="2.0" height="2.1"/><rect x="3.0" y="8.3" width="2.0" height="2.1"/><rect x="5.9" y="8.3" width="2.0" height="2.1"/><rect x="8.8" y="8.3" width="2.0" height="2.1"/></g></svg><div class="l" style="top:29px;letter-spacing:-0.77px;">Wave</div></div>
<div class="c" style="left:603px;top:321px;width:100px;height:98px;background:#383842"><div class="s" style="background:#00858a"></div><div class="n">6</div><div class="ic r" style="right:6px;top:8px">S</div><svg class="a" style="right:17px;top:8px" width="13" height="13" viewBox="0 0 13 13"><g fill="#000" opacity=".75" transform="translate(-.6,.7)"><rect x="4.9" y="0" width="2.3" height="6"/><path d="M1.7 5.4H10.4L6.05 10.1Z"/><rect x=".4" y="10.3" width="11.6" height="1.4"/></g><g fill="#00ffff"><rect x="4.9" y="0" width="2.3" height="6"/><path d="M1.7 5.4H10.4L6.05 10.1Z"/><rect x=".4" y="10.3" width="11.6" height="1.4"/></g></svg><div class="l" style="top:29px;padding-top:1.8px;letter-spacing:-0.61px;">Fan Out
Floor</div></div>
<div class="c" style="left:704px;top:321px;width:99px;height:98px;background:#131316"><div class="s" style="background:#012b2d"></div><div class="n ne">7</div></div>
<div class="c" style="left:804px;top:321px;width:99px;height:98px;background:#131316"><div class="s" style="background:#012b2d"></div><div class="n ne">8</div></div>
<div class="c" style="left:904px;top:321px;width:100px;height:98px;background:#131316"><div class="s" style="background:#012b2d"></div><div class="n ne">9</div></div>
<div class="c" style="left:1005px;top:321px;width:96px;height:98px;background:#131316;border-radius:0 9px 9px 0"><div class="s" style="background:#012b2d"></div><div class="n ne">10</div><svg class="a" style="right:0;bottom:0" width="32" height="32" viewBox="0 0 32 32"><path d="M32 0V32H0Z" fill="#383842"/><g stroke="#000" stroke-width="2.5"><path d="M16 22L23.5 14.5"/><path d="M19.3 25.3L26.8 17.8"/><path d="M22.6 28.6L30.1 21.1"/></g></svg></div>
<div class="t" style="top:427px;height:98px;background:#00858a"><div class="ma" style="left:4px;top:13px;color:#00858a"><b><span>M</span></b><b><span>A</span></b></div><svg class="a" style="left:62px;top:13.7px" width="22.5" height="22.5" viewBox="0 0 22.5 22.5"><g fill="#80ff80"><circle cx="11.1" cy="1.5" r="1.5"/><path d="M3.6 5.3 C5.5 2.6 8.5 1.6 11.1 1.6 C13.7 1.6 16.7 2.6 18.7 5.3 Z"/><rect x="0" y="7" width="22.3" height="2.4" rx=".6"/><path d="M2 9.3 H20.2 V18 Q20.2 19.9 18.3 19.9 H3.9 Q2 19.9 2 18 Z"/><rect x="0" y="20.9" width="22.5" height="1.6" rx=".5"/></g><g fill="none" stroke="#00858a" stroke-width="1" stroke-linecap="round"><path d="M8.3 10.8 q1.2 1.8 -.6 3.2 q-1.6 1.3 -.9 2.6"/><path d="M12.2 10.2 q1.3 1.9 -.7 3.6 q-1.7 1.4 -1 2.8"/><path d="M15.9 10.8 q1.2 1.8 -.6 3.2 q-1.6 1.3 -.9 2.6"/></g></svg><div class="ic g" style="left:72.3px;top:2.2px;transform-origin:0 50%">G</div><svg class="a" style="left:81.6px;top:1.6px" width="12" height="13" viewBox="0 0 12 13"><path d="M6 .2A5.3 5.3 0 0 1 8.9 9.9V12.6H3.3V9.9A5.3 5.3 0 0 1 6 .2Z" fill="#fff"/><path d="M5.6 1.5A4.1 4.1 0 0 0 5.6 9.3Z" fill="rgba(0,70,73,.9)"/></svg><div class="tl" style="top:48.9px;letter-spacing:0.23px;">3
Gobo</div></div>
<div class="c" style="left:102px;top:427px;width:99px;height:98px;background:#383842"><div class="s" style="background:#00858a"></div><div class="n">1</div><div class="ic g" style="right:6.3px;top:8px">G</div><svg class="a" style="right:17px;top:8px" width="13" height="13" viewBox="0 0 13 13"><g fill="#000" opacity=".75" transform="translate(-.6,.7)"><rect x="4.9" y="0" width="2.3" height="6"/><path d="M1.7 5.4H10.4L6.05 10.1Z"/><rect x=".4" y="10.3" width="11.6" height="1.4"/></g><g fill="#00ffff"><rect x="4.9" y="0" width="2.3" height="6"/><path d="M1.7 5.4H10.4L6.05 10.1Z"/><rect x=".4" y="10.3" width="11.6" height="1.4"/></g></svg><div class="l" style="top:29px;letter-spacing:-0.65px;">Open 1</div></div>
<div class="c" style="left:202px;top:427px;width:99px;height:98px;background:#383842"><div class="s" style="background:#00858a"></div><div class="n">2</div><svg class="a" style="left:14px;top:22px" width="72" height="72" viewBox="0 0 72 72"><defs><clipPath id="gc1"><circle cx="36" cy="36" r="27.5"/></clipPath></defs><circle cx="36" cy="36" r="35.6" fill="#000"/><g fill="#fff"><rect x="16.3" y="42.1" width="0.9" height="0.9" opacity="1"/><rect x="14.9" y="35.0" width="0.7" height="0.7" opacity="1"/><rect x="14.7" y="39.3" width="0.7" height="0.7" opacity="0.6"/><rect x="26.2" y="39.4" width="1.1" height="1.1" opacity="0.6"/><rect x="21.7" y="26.2" width="0.9" height="0.9" opacity="1"/><rect x="23.2" y="18.4" width="1.1" height="1.1" opacity="0.6"/><rect x="47.2" y="40.4" width="0.7" height="0.7" opacity="1"/><rect x="54.4" y="39.5" width="0.9" height="0.9" opacity="1"/><rect x="46.9" y="19.4" width="0.8" height="0.8" opacity="1"/><rect x="44.0" y="36.2" width="0.8" height="0.8" opacity="1"/><rect x="63.4" y="35.6" width="0.6" height="0.6" opacity="0.9"/><rect x="30.7" y="48.1" width="0.8" height="0.8" opacity="0.6"/><rect x="57.8" y="46.3" width="0.9" height="0.9" opacity="0.6"/><rect x="45.8" y="22.0" width="0.6" height="0.6" opacity="0.6"/><rect x="42.0" y="61.8" width="0.6" height="0.6" opacity="1"/><rect x="19.6" y="52.3" width="0.9" height="0.9" opacity="0.6"/><rect x="24.8" y="31.0" width="0.8" height="0.8" opacity="0.9"/><rect x="49.5" y="44.3" width="0.9" height="0.9" opacity="0.6"/><rect x="51.3" y="53.3" width="0.6" height="0.6" opacity="0.6"/><rect x="17.3" y="40.2" width="1.1" height="1.1" opacity="0.8"/><rect x="24.6" y="39.9" width="0.7" height="0.7" opacity="1"/><rect x="30.2" y="28.6" width="0.9" height="0.9" opacity="0.8"/><rect x="61.6" y="36.1" width="1.1" height="1.1" opacity="0.9"/><rect x="39.9" y="35.9" width="0.7" height="0.7" opacity="1"/><rect x="57.3" y="35.4" width="1.1" height="1.1" opacity="0.6"/><rect x="46.2" y="38.8" width="0.9" height="0.9" opacity="0.9"/><rect x="57.4" y="37.3" width="0.8" height="0.8" opacity="1"/><rect x="43.4" y="39.7" width="1.1" height="1.1" opacity="0.8"/><rect x="52.6" y="37.6" width="1.1" height="1.1" opacity="1"/><rect x="50.7" y="51.1" width="1.1" height="1.1" opacity="0.8"/><rect x="43.9" y="27.3" width="0.7" height="0.7" opacity="0.9"/><rect x="56.9" y="22.5" width="0.7" height="0.7" opacity="0.8"/><rect x="47.9" y="54.3" width="1.1" height="1.1" opacity="0.8"/><rect x="29.4" y="20.2" width="0.9" height="0.9" opacity="1"/><rect x="41.3" y="38.8" width="0.6" height="0.6" opacity="0.6"/><rect x="22.2" y="34.9" width="0.9" height="0.9" opacity="0.9"/><rect x="13.0" y="48.5" width="0.9" height="0.9" opacity="0.9"/><rect x="9.7" y="32.7" width="0.6" height="0.6" opacity="0.8"/><rect x="38.8" y="56.4" width="1.1" height="1.1" opacity="1"/><rect x="47.3" y="41.7" width="0.7" height="0.7" opacity="0.6"/><rect x="52.0" y="43.4" width="0.7" height="0.7" opacity="0.6"/><rect x="50.0" y="40.2" width="1.1" height="1.1" opacity="1"/><rect x="44.2" y="34.6" width="0.7" height="0.7" opacity="1"/><rect x="58.1" y="33.3" width="1.1" height="1.1" opacity="1"/><rect x="56.0" y="29.1" width="0.6" height="0.6" opacity="1"/><rect x="55.5" y="23.7" width="0.6" height="0.6" opacity="0.6"/><rect x="29.9" y="31.6" width="0.6" height="0.6" opacity="0.9"/><rect x="24.5" y="61.0" width="0.6" height="0.6" opacity="1"/><rect x="13.4" y="29.3" width="0.7" height="0.7" opacity="0.9"/><rect x="22.4" y="54.3" width="0.6" height="0.6" opacity="1"/><rect x="40.5" y="34.4" width="0.9" height="0.9" opacity="1"/><rect x="58.3" y="38.0" width="0.9" height="0.9" opacity="1"/><rect x="43.4" y="36.6" width="0.6" height="0.6" opacity="0.6"/><rect x="61.8" y="34.9" width="0.8" height="0.8" opacity="1"/><rect x="57.0" y="26.8" width="0.9" height="0.9" opacity="1"/><rect x="16.3" y="40.7" width="1.1" height="1.1" opacity="1"/><rect x="57.0" y="40.0" width="0.9" height="0.9" opacity="0.6"/><rect x="38.8" y="58.8" width="0.9" height="0.9" opacity="1"/><rect x="25.7" y="19.8" width="0.6" height="0.6" opacity="0.9"/><rect x="28.9" y="57.5" width="0.7" height="0.7" opacity="1"/><rect x="48.7" y="58.9" width="0.9" height="0.9" opacity="1"/><rect x="48.2" y="26.1" width="0.8" height="0.8" opacity="0.8"/><rect x="19.6" y="17.6" width="0.7" height="0.7" opacity="0.8"/><rect x="20.3" y="49.9" width="0.8" height="0.8" opacity="0.8"/><rect x="48.7" y="50.6" width="0.6" height="0.6" opacity="0.6"/><rect x="49.8" y="31.5" width="0.7" height="0.7" opacity="0.6"/><rect x="22.3" y="40.4" width="0.7" height="0.7" opacity="1"/><rect x="21.3" y="49.3" width="0.8" height="0.8" opacity="1"/><rect x="28.8" y="38.2" width="0.6" height="0.6" opacity="0.9"/><rect x="39.9" y="32.0" width="0.8" height="0.8" opacity="1"/><rect x="22.5" y="53.6" width="1.1" height="1.1" opacity="0.6"/><rect x="24.9" y="22.4" width="0.7" height="0.7" opacity="0.6"/><rect x="37.7" y="21.9" width="0.7" height="0.7" opacity="0.6"/><rect x="45.3" y="35.1" width="0.6" height="0.6" opacity="1"/><rect x="22.1" y="15.6" width="0.6" height="0.6" opacity="0.8"/><rect x="41.9" y="54.0" width="0.7" height="0.7" opacity="0.6"/><rect x="36.6" y="15.9" width="0.6" height="0.6" opacity="0.8"/><rect x="39.6" y="60.0" width="1.1" height="1.1" opacity="1"/><rect x="8.5" y="35.9" width="0.7" height="0.7" opacity="1"/><rect x="49.4" y="17.3" width="0.7" height="0.7" opacity="0.6"/><rect x="14.0" y="49.9" width="0.9" height="0.9" opacity="0.8"/><rect x="24.4" y="39.7" width="0.6" height="0.6" opacity="1"/><rect x="14.9" y="29.1" width="1.1" height="1.1" opacity="0.9"/><rect x="14.4" y="41.0" width="0.7" height="0.7" opacity="0.6"/><rect x="31.6" y="11.5" width="0.6" height="0.6" opacity="0.8"/><rect x="36.8" y="53.2" width="0.6" height="0.6" opacity="0.9"/><rect x="12.2" y="30.4" width="0.8" height="0.8" opacity="0.9"/><rect x="57.5" y="22.4" width="0.8" height="0.8" opacity="1"/><rect x="51.8" y="45.1" width="1.1" height="1.1" opacity="1"/><rect x="38.2" y="16.9" width="0.6" height="0.6" opacity="0.8"/><rect x="38.5" y="29.5" width="0.6" height="0.6" opacity="0.8"/><rect x="13.7" y="31.3" width="0.7" height="0.7" opacity="1"/><rect x="47.7" y="51.9" width="1.1" height="1.1" opacity="1"/><rect x="54.2" y="29.5" width="0.6" height="0.6" opacity="0.8"/><rect x="16.9" y="43.6" width="1.1" height="1.1" opacity="0.8"/><rect x="11.0" y="32.4" width="1.1" height="1.1" opacity="0.9"/><rect x="29.6" y="51.7" width="1.1" height="1.1" opacity="0.8"/><rect x="32.5" y="45.7" width="1.1" height="1.1" opacity="1"/><rect x="33.2" y="55.2" width="0.9" height="0.9" opacity="1"/><rect x="37.5" y="37.3" width="0.9" height="0.9" opacity="0.6"/><rect x="30.4" y="34.6" width="0.9" height="0.9" opacity="1"/><rect x="42.5" y="16.4" width="0.9" height="0.9" opacity="0.6"/><rect x="33.4" y="29.4" width="1.1" height="1.1" opacity="1"/><rect x="13.0" y="49.9" width="0.9" height="0.9" opacity="0.9"/><rect x="36.5" y="55.3" width="0.8" height="0.8" opacity="1"/><rect x="57.6" y="20.5" width="0.9" height="0.9" opacity="1"/><rect x="31.1" y="47.0" width="1.1" height="1.1" opacity="0.6"/><rect x="44.8" y="31.5" width="0.6" height="0.6" opacity="0.6"/><rect x="40.5" y="48.3" width="0.8" height="0.8" opacity="0.9"/><rect x="33.8" y="22.6" width="0.9" height="0.9" opacity="0.6"/><rect x="15.0" y="36.0" width="1.1" height="1.1" opacity="1"/><rect x="36.0" y="48.2" width="1.1" height="1.1" opacity="1"/><rect x="57.6" y="39.2" width="1.1" height="1.1" opacity="1"/><rect x="42.7" y="46.5" width="1.1" height="1.1" opacity="0.8"/><rect x="11.1" y="31.3" width="1.1" height="1.1" opacity="1"/><rect x="44.2" y="25.6" width="0.8" height="0.8" opacity="0.8"/><rect x="29.8" y="50.1" width="0.7" height="0.7" opacity="0.8"/><rect x="38.1" y="24.1" width="0.6" height="0.6" opacity="0.8"/><rect x="43.7" y="29.6" width="0.6" height="0.6" opacity="0.9"/><rect x="22.2" y="47.7" width="0.9" height="0.9" opacity="1"/><rect x="38.4" y="26.5" width="0.9" height="0.9" opacity="0.6"/><rect x="53.1" y="47.8" width="0.8" height="0.8" opacity="0.9"/><rect x="50.6" y="49.0" width="0.8" height="0.8" opacity="1"/><rect x="61.1" y="35.8" width="0.6" height="0.6" opacity="1"/><rect x="40.2" y="39.3" width="1.1" height="1.1" opacity="1"/><rect x="15.4" y="34.1" width="0.7" height="0.7" opacity="0.8"/><rect x="41.0" y="47.4" width="0.7" height="0.7" opacity="0.9"/><rect x="43.6" y="32.2" width="0.6" height="0.6" opacity="0.8"/><rect x="53.8" y="30.4" width="0.6" height="0.6" opacity="0.9"/><rect x="22.1" y="47.4" width="0.8" height="0.8" opacity="1"/><rect x="40.2" y="52.3" width="0.6" height="0.6" opacity="0.8"/><rect x="43.8" y="52.8" width="0.8" height="0.8" opacity="1"/><rect x="54.9" y="25.9" width="0.6" height="0.6" opacity="1"/><rect x="40.1" y="20.9" width="0.6" height="0.6" opacity="1"/><rect x="25.1" y="30.9" width="1.1" height="1.1" opacity="0.9"/><rect x="40.7" y="22.8" width="0.6" height="0.6" opacity="0.8"/><rect x="42.9" y="19.9" width="0.8" height="0.8" opacity="1"/><rect x="27.8" y="13.3" width="0.7" height="0.7" opacity="1"/><rect x="39.2" y="47.4" width="0.8" height="0.8" opacity="0.9"/><rect x="33.2" y="36.6" width="0.8" height="0.8" opacity="1"/><rect x="49.7" y="40.4" width="0.8" height="0.8" opacity="0.9"/><rect x="39.7" y="53.1" width="0.7" height="0.7" opacity="1"/><rect x="53.5" y="45.2" width="0.9" height="0.9" opacity="0.8"/><rect x="28.8" y="13.1" width="1.1" height="1.1" opacity="0.6"/><rect x="42.8" y="42.0" width="0.7" height="0.7" opacity="0.9"/><rect x="17.7" y="42.8" width="0.7" height="0.7" opacity="1"/><rect x="50.0" y="36.9" width="0.8" height="0.8" opacity="0.9"/><rect x="17.4" y="29.9" width="1.1" height="1.1" opacity="1"/><rect x="40.9" y="28.9" width="0.9" height="0.9" opacity="0.6"/><rect x="14.6" y="29.1" width="0.6" height="0.6" opacity="1"/><rect x="46.0" y="31.3" width="0.9" height="0.9" opacity="0.8"/><rect x="48.5" y="20.1" width="1.1" height="1.1" opacity="0.6"/><rect x="18.5" y="44.3" width="0.8" height="0.8" opacity="1"/><rect x="23.6" y="45.1" width="1.1" height="1.1" opacity="0.9"/><rect x="21.8" y="37.5" width="0.8" height="0.8" opacity="0.9"/><rect x="59.8" y="40.1" width="1.1" height="1.1" opacity="0.6"/><rect x="24.2" y="23.0" width="0.9" height="0.9" opacity="0.6"/><rect x="55.0" y="21.7" width="0.6" height="0.6" opacity="1"/><rect x="62.7" y="34.1" width="0.6" height="0.6" opacity="0.8"/><rect x="18.8" y="44.1" width="0.7" height="0.7" opacity="0.6"/><rect x="9.7" y="32.1" width="0.9" height="0.9" opacity="0.8"/><rect x="60.6" y="32.7" width="1.1" height="1.1" opacity="0.6"/><rect x="52.9" y="41.5" width="0.6" height="0.6" opacity="0.8"/><rect x="46.6" y="23.4" width="0.7" height="0.7" opacity="0.6"/><rect x="29.3" y="43.8" width="0.9" height="0.9" opacity="1"/><rect x="18.3" y="23.0" width="0.9" height="0.9" opacity="0.9"/><rect x="39.5" y="16.3" width="0.7" height="0.7" opacity="0.9"/><rect x="34.7" y="22.6" width="0.6" height="0.6" opacity="1"/><rect x="55.0" y="20.8" width="1.1" height="1.1" opacity="0.9"/><rect x="32.7" y="57.2" width="1.1" height="1.1" opacity="1"/><rect x="41.3" y="49.5" width="0.7" height="0.7" opacity="0.8"/><rect x="54.6" y="30.2" width="0.7" height="0.7" opacity="0.6"/><rect x="34.1" y="34.1" width="0.8" height="0.8" opacity="1"/><rect x="41.3" y="36.9" width="0.7" height="0.7" opacity="1"/><rect x="31.8" y="59.5" width="0.7" height="0.7" opacity="1"/><rect x="38.6" y="63.1" width="0.9" height="0.9" opacity="1"/><rect x="26.3" y="48.7" width="0.9" height="0.9" opacity="0.8"/><rect x="40.0" y="29.6" width="0.6" height="0.6" opacity="1"/><rect x="43.9" y="15.8" width="0.7" height="0.7" opacity="1"/><rect x="23.6" y="42.4" width="0.7" height="0.7" opacity="0.9"/><rect x="50.3" y="56.7" width="1.1" height="1.1" opacity="0.9"/><rect x="29.9" y="59.2" width="0.7" height="0.7" opacity="1"/><rect x="24.1" y="18.8" width="0.9" height="0.9" opacity="0.9"/><rect x="43.0" y="39.8" width="1.1" height="1.1" opacity="1"/><rect x="13.3" y="38.2" width="0.8" height="0.8" opacity="0.6"/><rect x="47.3" y="41.8" width="1.1" height="1.1" opacity="0.6"/><rect x="29.5" y="17.8" width="0.8" height="0.8" opacity="0.9"/><rect x="45.5" y="27.3" width="0.8" height="0.8" opacity="0.9"/><rect x="49.0" y="27.3" width="0.9" height="0.9" opacity="1"/><rect x="14.4" y="21.3" width="0.8" height="0.8" opacity="1"/><rect x="9.1" y="30.8" width="0.9" height="0.9" opacity="0.9"/><rect x="40.9" y="62.6" width="1.1" height="1.1" opacity="0.8"/><rect x="57.6" y="48.6" width="0.6" height="0.6" opacity="0.9"/><rect x="26.7" y="17.1" width="0.7" height="0.7" opacity="1"/><rect x="24.4" y="48.7" width="0.7" height="0.7" opacity="1"/><rect x="25.3" y="31.6" width="0.9" height="0.9" opacity="0.9"/><rect x="40.9" y="24.0" width="0.6" height="0.6" opacity="1"/><rect x="44.1" y="48.6" width="0.6" height="0.6" opacity="1"/><rect x="54.7" y="44.0" width="1.1" height="1.1" opacity="0.6"/><rect x="28.7" y="48.4" width="0.6" height="0.6" opacity="0.9"/><rect x="54.9" y="47.1" width="0.7" height="0.7" opacity="0.6"/><rect x="35.4" y="13.9" width="0.7" height="0.7" opacity="0.8"/><rect x="9.9" y="37.8" width="0.8" height="0.8" opacity="1"/><rect x="23.4" y="45.8" width="0.8" height="0.8" opacity="0.8"/><rect x="15.9" y="36.8" width="0.6" height="0.6" opacity="1"/><rect x="51.2" y="27.0" width="0.8" height="0.8" opacity="0.6"/><rect x="44.6" y="12.4" width="0.9" height="0.9" opacity="1"/><rect x="23.3" y="20.6" width="0.6" height="0.6" opacity="0.6"/><rect x="20.3" y="44.4" width="0.7" height="0.7" opacity="0.8"/><rect x="34.5" y="8.7" width="0.9" height="0.9" opacity="0.8"/><rect x="28.6" y="51.5" width="1.1" height="1.1" opacity="0.9"/><rect x="32.1" y="61.6" width="0.9" height="0.9" opacity="0.9"/><rect x="34.2" y="21.0" width="0.7" height="0.7" opacity="0.8"/><rect x="56.3" y="23.5" width="0.6" height="0.6" opacity="1"/><rect x="11.6" y="38.9" width="0.8" height="0.8" opacity="0.6"/><rect x="41.3" y="51.6" width="1.1" height="1.1" opacity="0.8"/><rect x="20.7" y="24.9" width="1.1" height="1.1" opacity="0.8"/><rect x="11.7" y="45.3" width="0.9" height="0.9" opacity="0.8"/><rect x="58.5" y="21.8" width="1.1" height="1.1" opacity="1"/><rect x="22.1" y="37.8" width="0.9" height="0.9" opacity="0.9"/><rect x="23.1" y="15.6" width="0.6" height="0.6" opacity="1"/><rect x="47.3" y="22.8" width="0.7" height="0.7" opacity="0.8"/><rect x="41.4" y="19.8" width="1.1" height="1.1" opacity="1"/><rect x="39.7" y="11.9" width="0.6" height="0.6" opacity="0.8"/><rect x="56.0" y="19.9" width="0.8" height="0.8" opacity="1"/><rect x="42.7" y="13.8" width="1.1" height="1.1" opacity="0.8"/><rect x="15.1" y="48.2" width="0.7" height="0.7" opacity="0.9"/><rect x="56.7" y="22.5" width="0.7" height="0.7" opacity="1"/><rect x="33.9" y="56.0" width="0.7" height="0.7" opacity="1"/><rect x="36.1" y="35.0" width="0.7" height="0.7" opacity="0.8"/><rect x="48.4" y="43.1" width="1.1" height="1.1" opacity="0.6"/><rect x="53.6" y="21.4" width="0.6" height="0.6" opacity="1"/><rect x="17.2" y="30.7" width="0.6" height="0.6" opacity="0.8"/><rect x="13.2" y="49.1" width="0.6" height="0.6" opacity="1"/><rect x="41.2" y="55.6" width="1.1" height="1.1" opacity="1"/><rect x="49.8" y="57.0" width="0.8" height="0.8" opacity="0.9"/><rect x="33.2" y="43.0" width="0.8" height="0.8" opacity="1"/><rect x="32.5" y="29.8" width="0.6" height="0.6" opacity="0.8"/><rect x="49.6" y="46.6" width="0.9" height="0.9" opacity="0.6"/><rect x="34.3" y="33.5" width="0.9" height="0.9" opacity="1"/><rect x="37.6" y="56.6" width="0.9" height="0.9" opacity="0.6"/><rect x="51.6" y="16.1" width="0.7" height="0.7" opacity="1"/><rect x="48.6" y="53.8" width="1.1" height="1.1" opacity="0.9"/><rect x="58.9" y="29.2" width="1.1" height="1.1" opacity="0.6"/><rect x="35.5" y="48.3" width="0.6" height="0.6" opacity="0.9"/><rect x="30.7" y="49.4" width="0.9" height="0.9" opacity="0.9"/><rect x="19.9" y="41.6" width="0.6" height="0.6" opacity="0.8"/><rect x="28.8" y="29.1" width="0.7" height="0.7" opacity="0.8"/><rect x="37.8" y="40.9" width="0.9" height="0.9" opacity="1"/><rect x="33.5" y="27.6" width="0.6" height="0.6" opacity="0.8"/><rect x="54.1" y="34.6" width="0.6" height="0.6" opacity="0.9"/><rect x="51.8" y="27.4" width="1.1" height="1.1" opacity="0.8"/><rect x="21.5" y="16.8" width="0.9" height="0.9" opacity="1"/><rect x="27.4" y="51.4" width="0.6" height="0.6" opacity="1"/><rect x="24.3" y="25.9" width="0.7" height="0.7" opacity="1"/><rect x="22.2" y="33.4" width="0.7" height="0.7" opacity="0.9"/><rect x="29.6" y="53.1" width="1.1" height="1.1" opacity="1"/><rect x="40.4" y="51.2" width="0.8" height="0.8" opacity="0.6"/><rect x="27.6" y="28.9" width="1.1" height="1.1" opacity="0.9"/><rect x="20.4" y="31.1" width="1.1" height="1.1" opacity="1"/><rect x="50.6" y="54.1" width="1.1" height="1.1" opacity="0.8"/><rect x="31.9" y="34.2" width="0.7" height="0.7" opacity="0.6"/><rect x="48.5" y="50.4" width="0.9" height="0.9" opacity="0.9"/><rect x="23.3" y="59.3" width="0.8" height="0.8" opacity="0.9"/><rect x="26.6" y="38.2" width="0.7" height="0.7" opacity="0.8"/><rect x="52.7" y="24.5" width="1.1" height="1.1" opacity="0.6"/><rect x="22.9" y="30.8" width="0.8" height="0.8" opacity="1"/><rect x="52.2" y="57.1" width="0.6" height="0.6" opacity="0.9"/><rect x="29.4" y="20.8" width="1.1" height="1.1" opacity="0.9"/><rect x="41.8" y="25.6" width="1.1" height="1.1" opacity="0.6"/><rect x="19.2" y="40.9" width="0.7" height="0.7" opacity="0.9"/><rect x="37.0" y="10.7" width="0.9" height="0.9" opacity="1"/><rect x="15.3" y="22.5" width="0.6" height="0.6" opacity="0.8"/><rect x="41.9" y="53.9" width="0.7" height="0.7" opacity="1"/><rect x="20.3" y="49.6" width="0.7" height="0.7" opacity="0.9"/><rect x="22.0" y="34.3" width="1.1" height="1.1" opacity="0.9"/><rect x="59.0" y="44.0" width="0.7" height="0.7" opacity="1"/><rect x="56.6" y="30.6" width="0.9" height="0.9" opacity="0.9"/><rect x="17.6" y="47.5" width="1.1" height="1.1" opacity="1"/><rect x="36.2" y="16.8" width="0.9" height="0.9" opacity="1"/><rect x="40.3" y="27.6" width="0.6" height="0.6" opacity="1"/><rect x="26.4" y="53.4" width="0.9" height="0.9" opacity="0.6"/><rect x="33.2" y="41.8" width="1.1" height="1.1" opacity="1"/><rect x="33.6" y="14.9" width="0.8" height="0.8" opacity="1"/><rect x="45.7" y="26.5" width="0.9" height="0.9" opacity="0.8"/><rect x="18.7" y="35.7" width="0.6" height="0.6" opacity="1"/><rect x="29.2" y="17.2" width="0.7" height="0.7" opacity="1"/><rect x="30.0" y="52.2" width="0.7" height="0.7" opacity="0.6"/><rect x="59.5" y="35.9" width="0.8" height="0.8" opacity="1"/><rect x="14.3" y="47.7" width="0.7" height="0.7" opacity="1"/><rect x="12.1" y="25.3" width="0.6" height="0.6" opacity="1"/><rect x="38.5" y="26.7" width="1.1" height="1.1" opacity="1"/><rect x="36.6" y="35.8" width="0.7" height="0.7" opacity="0.9"/><rect x="47.3" y="37.7" width="0.9" height="0.9" opacity="1"/><rect x="42.9" y="20.1" width="0.8" height="0.8" opacity="1"/><rect x="37.8" y="51.1" width="0.9" height="0.9" opacity="0.9"/><rect x="29.1" y="54.1" width="0.9" height="0.9" opacity="0.8"/><rect x="43.5" y="60.4" width="0.6" height="0.6" opacity="0.8"/><rect x="25.7" y="59.3" width="0.9" height="0.9" opacity="0.6"/><rect x="48.2" y="58.7" width="1.1" height="1.1" opacity="0.8"/><rect x="22.9" y="33.2" width="0.6" height="0.6" opacity="0.6"/><rect x="27.4" y="59.3" width="0.8" height="0.8" opacity="1"/><rect x="33.7" y="26.2" width="0.9" height="0.9" opacity="1"/><rect x="47.4" y="42.2" width="0.8" height="0.8" opacity="0.6"/><rect x="33.0" y="24.2" width="0.7" height="0.7" opacity="0.8"/><rect x="21.1" y="35.9" width="0.8" height="0.8" opacity="0.9"/><rect x="42.6" y="17.2" width="0.6" height="0.6" opacity="1"/><rect x="9.0" y="33.3" width="0.7" height="0.7" opacity="0.8"/><rect x="32.3" y="57.7" width="0.6" height="0.6" opacity="1"/><rect x="54.1" y="34.1" width="1.1" height="1.1" opacity="0.6"/><rect x="30.3" y="34.9" width="1.1" height="1.1" opacity="1"/><rect x="33.0" y="49.5" width="1.1" height="1.1" opacity="0.6"/><rect x="50.0" y="59.5" width="0.7" height="0.7" opacity="0.8"/><rect x="46.1" y="57.3" width="0.6" height="0.6" opacity="0.8"/><rect x="38.7" y="25.7" width="0.6" height="0.6" opacity="1"/><rect x="12.9" y="41.7" width="0.9" height="0.9" opacity="0.6"/><rect x="53.6" y="27.6" width="0.7" height="0.7" opacity="0.6"/><rect x="15.3" y="28.4" width="0.8" height="0.8" opacity="0.9"/><rect x="22.7" y="15.6" width="1.1" height="1.1" opacity="0.9"/><rect x="10.7" y="35.1" width="1.1" height="1.1" opacity="1"/><rect x="47.2" y="57.6" width="0.7" height="0.7" opacity="0.6"/><rect x="25.6" y="27.6" width="0.9" height="0.9" opacity="1"/><rect x="39.5" y="11.9" width="0.7" height="0.7" opacity="0.9"/><rect x="23.1" y="36.9" width="1.1" height="1.1" opacity="1"/><rect x="30.8" y="36.0" width="1.1" height="1.1" opacity="0.6"/><rect x="12.9" y="24.7" width="0.7" height="0.7" opacity="0.9"/><rect x="38.1" y="39.0" width="0.9" height="0.9" opacity="1"/><rect x="12.6" y="35.5" width="0.6" height="0.6" opacity="0.6"/><rect x="44.7" y="43.6" width="1.1" height="1.1" opacity="1"/><rect x="39.5" y="23.0" width="0.7" height="0.7" opacity="0.6"/></g></svg><div class="ic g" style="right:6.3px;top:8px">G</div><div class="l o" style="top:29px;letter-spacing:-0.06px;">1/1 Rotate</div></div>
<div class="c" style="left:302px;top:427px;width:100px;height:98px;background:#383842"><div class="s" style="background:#00858a"></div><div class="n">3</div><svg class="a" style="left:14px;top:22px" width="72" height="72" viewBox="0 0 72 72"><defs><clipPath id="gc2"><circle cx="36" cy="36" r="27.5"/></clipPath></defs><circle cx="36" cy="36" r="35.6" fill="#000"/><g fill="#fff"><rect x="26.0" y="9.7" width="2.4" height="2.8" rx=".4"/><rect x="32.5" y="6.9" width="2.3" height="6.6" rx=".4"/><rect x="37.9" y="9.2" width="2.8" height="3.0" rx=".4"/><rect x="43.5" y="10.7" width="5.4" height="9.9" rx=".4"/><rect x="18.9" y="13.2" width="5.0" height="3.4" rx=".4"/><rect x="25.8" y="15.1" width="5.4" height="3.4" rx=".4"/><rect x="34.1" y="17.3" width="6.3" height="4.1" rx=".4"/><rect x="54.9" y="17.0" width="2.8" height="3.6" rx=".4"/><rect x="14.8" y="16.3" width="1.9" height="7.1" rx=".4"/><rect x="20.1" y="19.2" width="4.2" height="3.3" rx=".4"/><rect x="29.3" y="21.1" width="2.4" height="4.7" rx=".4"/><rect x="48.3" y="22.0" width="9.5" height="3.8" rx=".4"/><rect x="9.2" y="23.0" width="2.7" height="5.2" rx=".4"/><rect x="14.2" y="24.2" width="3.5" height="3.5" rx=".4"/><rect x="22.4" y="24.9" width="4.5" height="2.4" rx=".4"/><rect x="37.6" y="23.4" width="7.9" height="2.7" rx=".4"/><rect x="34.5" y="27.7" width="8.5" height="2.2" rx=".4"/><rect x="55.4" y="27.2" width="6.6" height="3.8" rx=".4"/><rect x="24.1" y="29.6" width="3.8" height="5.2" rx=".4"/><rect x="45.0" y="29.6" width="3.8" height="3.3" rx=".4"/><rect x="18.4" y="40.0" width="4.7" height="3.3" rx=".4"/><rect x="9.4" y="44.3" width="3.8" height="4.3" rx=".4"/><rect x="15.1" y="47.1" width="3.1" height="9.0" rx=".4"/><rect x="20.3" y="46.6" width="5.7" height="5.2" rx=".4"/><rect x="28.9" y="50.0" width="7.6" height="2.8" rx=".4"/><rect x="41.2" y="44.3" width="9.5" height="7.1" rx=".4"/><rect x="54.4" y="47.1" width="4.3" height="7.6" rx=".4"/><rect x="60.1" y="45.7" width="1.9" height="2.8" rx=".4"/><rect x="22.2" y="54.5" width="4.7" height="1.3" rx=".4"/><rect x="23.9" y="58.3" width="8.0" height="3.8" rx=".4"/><rect x="35.3" y="56.1" width="3.5" height="8.5" rx=".4"/><rect x="41.4" y="56.4" width="6.0" height="4.4" rx=".4"/><rect x="34.5" y="44.3" width="4.3" height="2.4" rx=".4"/><rect x="50.6" y="34.8" width="3.8" height="3.8" rx=".4"/><rect x="31.7" y="35.8" width="3.8" height="3.8" rx=".4"/></g></svg><div class="ic g" style="right:6.3px;top:8px">G</div><svg class="a" style="right:17px;top:8px" width="13" height="13" viewBox="0 0 13 13"><g fill="#000" opacity=".75" transform="translate(-.6,.7)"><rect x="4.9" y="0" width="2.3" height="6"/><path d="M1.7 5.4H10.4L6.05 10.1Z"/><rect x=".4" y="10.3" width="11.6" height="1.4"/></g><g fill="#00ffff"><rect x="4.9" y="0" width="2.3" height="6"/><path d="M1.7 5.4H10.4L6.05 10.1Z"/><rect x=".4" y="10.3" width="11.6" height="1.4"/></g></svg><div class="l o" style="top:29px;letter-spacing:-0.06px;">1/2 Rotate</div></div>
<div class="c" style="left:403px;top:427px;width:99px;height:98px;background:#383842"><div class="s" style="background:#00858a"></div><div class="n">4</div><svg class="a" style="left:14px;top:22px" width="72" height="72" viewBox="0 0 72 72"><defs><clipPath id="gc3"><circle cx="36" cy="36" r="27.5"/></clipPath></defs><circle cx="36" cy="36" r="35.6" fill="#000"/><defs><radialGradient id="g3"><stop offset="0" stop-color="#e0e0e0"/><stop offset=".55" stop-color="#c8c8c8"/><stop offset=".85" stop-color="#707070"/><stop offset="1" stop-color="#000"/></radialGradient></defs><circle cx="36" cy="36" r="29" fill="url(#g3)"/><g clip-path="url(#gc3)"><polygon points="38.6,6.3 38.0,8.9 34.9,9.4 33.5,6.3 35.7,4.2" fill="#1e1e1e"/><polygon points="43.3,8.6 41.5,10.0 38.6,8.0 39.1,5.3 42.0,4.4 43.9,6.5" fill="#121212"/><polygon points="21.0,13.9 19.9,11.0 20.7,9.5 23.8,9.6 24.8,11.9 23.5,14.1" fill="#191919"/><polygon points="29.5,11.4 28.3,13.1 25.3,12.8 24.3,11.0 26.6,8.7 28.7,8.8" fill="#151515"/><polygon points="33.7,9.1 35.4,10.1 36.3,12.1 34.2,14.3 31.8,13.5 31.4,11.7" fill="#2f2f2f"/><polygon points="37.6,8.8 40.2,9.7 41.4,12.5 39.1,14.4 37.0,13.6 35.7,11.6" fill="#141414"/><polygon points="45.3,14.2 43.7,14.7 41.6,13.6 41.0,11.3 43.8,9.8 45.6,10.2 46.4,12.4" fill="#242424"/><polygon points="50.6,14.2 48.5,11.7 49.1,9.4 50.6,8.2 53.3,9.1 54.0,12.3 52.9,13.6" fill="#0e0e0e"/><polygon points="15.5,14.8 16.8,16.7 15.9,18.5 13.4,19.4 11.0,17.0 12.3,14.5" fill="#151515"/><polygon points="21.9,17.5 19.5,19.1 17.6,16.8 18.1,14.0 20.4,13.0 22.0,14.5" fill="#2f2f2f"/><polygon points="22.8,17.0 23.2,14.0 25.4,13.3 27.1,14.8 26.6,18.0 24.7,18.9" fill="#404040"/><polygon points="27.9,14.7 29.9,14.6 32.5,16.6 32.3,18.6 30.1,19.9 27.6,18.4 27.0,17.0" fill="#252525"/><polygon points="37.4,13.1 39.4,16.1 38.2,18.1 35.8,18.9 34.8,17.6 33.6,15.0 35.9,13.1" fill="#252525"/><polygon points="38.4,15.5 41.3,13.2 43.6,14.9 42.7,18.1 39.0,18.1" fill="#3e3e3e"/><polygon points="43.8,17.9 44.6,14.7 47.9,14.7 49.5,17.9 46.3,20.1" fill="#282828"/><polygon points="54.9,14.8 56.3,17.1 55.3,19.0 52.1,19.4 51.5,16.5 52.9,14.3" fill="#161616"/><polygon points="58.2,18.2 56.3,18.0 55.9,15.0 56.6,13.4 58.7,13.1 60.9,14.1 61.0,16.2" fill="#191919"/><polygon points="14.0,21.9 11.0,23.6 8.1,20.5 10.2,17.7 13.2,18.7" fill="#1e1e1e"/><polygon points="15.4,23.9 13.6,21.4 14.7,19.7 18.0,19.4 18.6,22.5" fill="#151515"/><polygon points="23.7,19.5 23.9,22.0 22.7,23.1 20.6,23.1 19.1,21.1 20.3,18.7 22.2,18.4" fill="#2b2b2b"/><polygon points="30.8,22.8 29.1,24.7 25.7,22.9 26.3,20.1 29.3,19.4" fill="#414141"/><polygon points="37.1,20.2 35.5,23.3 33.1,23.3 31.8,21.6 31.9,18.8 34.8,18.4" fill="#252525"/><polygon points="37.4,19.4 39.0,18.4 41.2,19.3 41.9,22.6 39.2,23.3 36.7,21.5" fill="#2e2e2e"/><polygon points="42.9,23.4 41.3,21.8 41.5,19.6 43.0,18.3 45.0,18.5 46.6,20.2 44.8,23.1" fill="#595959"/><polygon points="50.3,18.8 52.8,19.9 53.4,22.8 51.3,24.0 48.5,23.0 48.3,19.8" fill="#3d3d3d"/><polygon points="59.4,22.7 56.0,24.4 54.6,23.0 53.9,21.0 56.3,19.3 58.7,20.6" fill="#2a2a2a"/><polygon points="62.3,17.3 64.9,20.0 63.7,22.6 60.7,22.5 60.3,19.3" fill="#242424"/><polygon points="5.4,24.3 8.4,22.7 9.9,24.6 9.8,27.8 7.3,28.5 4.6,26.3" fill="#1e1e1e"/><polygon points="15.6,27.4 13.5,29.7 12.1,29.5 10.1,27.4 10.6,25.7 12.3,23.9 14.3,24.6" fill="#2a2a2a"/><polygon points="18.2,28.1 17.0,27.2 16.0,24.3 17.9,23.0 20.4,23.6 20.4,26.6" fill="#2b2b2b"/><polygon points="25.2,22.8 27.1,23.4 27.7,26.8 26.1,27.9 23.7,27.2 22.2,25.1" fill="#383838"/><polygon points="27.9,26.8 28.7,23.5 30.2,22.5 33.3,24.1 32.5,27.0 30.8,28.5" fill="#4a4a4a"/><polygon points="33.1,26.3 34.0,24.7 36.7,24.2 38.8,26.7 37.5,28.6 34.7,29.3" fill="#2c2c2c"/><polygon points="38.3,25.0 39.7,23.2 42.7,23.3 43.6,25.5 42.8,27.6 39.9,27.9" fill="#595959"/><polygon points="44.7,26.6 43.8,25.0 45.4,22.7 47.7,22.4 49.7,24.4 48.5,26.9 46.4,27.8" fill="#5f5f5f"/><polygon points="55.2,29.1 51.1,29.6 50.6,26.6 53.2,23.9 55.5,25.9" fill="#383838"/><polygon points="59.2,27.6 56.7,27.8 55.2,25.1 56.1,23.3 58.7,22.9 60.7,25.2" fill="#353535"/><polygon points="61.1,24.9 62.8,23.2 66.1,23.9 67.1,25.6 65.7,27.7 62.0,26.9" fill="#151515"/><polygon points="12.9,32.6 10.1,34.4 8.0,34.0 7.2,31.2 9.6,29.0 11.8,30.1" fill="#101010"/><polygon points="16.8,34.1 14.3,32.6 14.1,30.1 17.4,28.5 19.1,31.6" fill="#262626"/><polygon points="24.1,30.6 23.9,34.1 20.7,34.0 19.1,31.7 22.3,28.8" fill="#616161"/><polygon points="25.6,33.2 24.3,30.0 25.5,27.8 27.8,27.8 29.0,29.8 28.3,32.3" fill="#2a2a2a"/><polygon points="31.0,33.6 30.9,31.7 31.6,29.5 34.3,29.3 36.0,30.0 35.9,32.1 33.5,34.6" fill="#2e2e2e"/><polygon points="38.1,34.1 36.2,31.9 37.6,28.3 40.2,28.5 41.1,31.7" fill="#2e2e2e"/><polygon points="47.7,31.3 44.8,34.4 42.8,32.6 43.0,29.4 46.6,29.3" fill="#6e6e6e"/><polygon points="47.7,30.0 50.1,28.5 51.9,30.1 51.6,33.3 50.0,33.8 47.4,32.3" fill="#454545"/><polygon points="54.5,30.4 58.2,29.3 58.9,31.0 59.0,34.2 56.4,34.8 53.8,32.4" fill="#2a2a2a"/><polygon points="61.5,33.9 59.2,32.7 58.4,29.9 60.9,28.8 63.3,29.7 63.7,32.7" fill="#121212"/><polygon points="10.5,37.0 9.4,39.6 5.9,38.8 5.1,36.1 7.4,34.2 10.6,34.8" fill="#0e0e0e"/><polygon points="14.1,38.8 11.8,38.4 10.8,35.4 12.7,34.2 15.5,34.3 16.0,36.8" fill="#1f1f1f"/><polygon points="20.6,36.5 18.7,38.8 17.0,38.3 15.3,35.9 16.0,34.2 19.0,33.6 20.3,34.8" fill="#3c3c3c"/><polygon points="21.9,34.5 25.2,34.3 26.0,35.8 25.8,38.4 22.7,39.4 21.4,37.3" fill="#333333"/><polygon points="28.3,35.0 30.5,34.2 32.9,36.0 32.3,38.9 28.2,38.7" fill="#3a3a3a"/><polygon points="38.0,36.3 36.3,39.3 33.2,38.2 33.6,35.2 36.4,34.3" fill="#555555"/><polygon points="43.4,37.7 40.7,37.7 39.6,36.3 39.8,33.1 41.4,32.6 44.0,34.2 44.2,36.4" fill="#626262"/><polygon points="45.6,34.8 48.2,34.2 49.8,36.4 49.8,38.7 46.3,39.2 44.3,36.9" fill="#343434"/><polygon points="55.5,37.5 52.5,38.3 50.8,35.9 52.7,33.0 56.4,35.0" fill="#222222"/><polygon points="62.2,36.6 59.9,39.1 57.8,39.5 56.3,36.6 58.7,33.9 61.1,35.0" fill="#232323"/><polygon points="66.9,33.4 67.4,36.1 64.5,38.0 62.7,37.4 62.5,34.8 64.0,33.1" fill="#151515"/><polygon points="12.3,40.3 11.4,43.5 9.1,43.7 6.6,41.1 7.7,39.1 10.2,38.6" fill="#171717"/><polygon points="15.1,38.7 17.1,38.3 19.6,40.5 18.4,43.3 15.6,43.6 14.3,42.0" fill="#4c4c4c"/><polygon points="23.8,42.8 21.0,43.2 19.2,40.6 21.2,38.5 24.2,39.9" fill="#2f2f2f"/><polygon points="28.4,43.8 26.8,44.0 24.1,42.0 25.7,39.4 27.7,39.3 30.0,41.2" fill="#404040"/><polygon points="32.9,43.4 31.2,42.8 31.0,40.9 32.6,38.9 34.7,38.3 35.6,40.1 35.4,42.9" fill="#767676"/><polygon points="41.5,42.6 38.7,43.9 36.5,42.7 35.8,40.0 37.7,38.4 40.9,38.9" fill="#454545"/><polygon points="46.8,38.6 46.3,40.6 44.3,42.9 41.4,41.8 41.9,38.6 44.2,36.9" fill="#2c2c2c"/><polygon points="53.3,38.9 54.0,40.8 51.6,42.6 48.7,41.4 48.5,38.1 51.5,37.0" fill="#4f4f4f"/><polygon points="57.7,39.3 58.3,42.6 56.2,44.5 53.1,43.0 54.3,39.9" fill="#1d1d1d"/><polygon points="60.6,38.2 63.6,38.6 64.3,40.3 62.3,43.2 60.1,42.9 59.1,39.6" fill="#2c2c2c"/><polygon points="11.0,47.1 12.4,44.0 14.6,43.7 16.9,45.5 16.2,48.0 12.2,48.6" fill="#2d2d2d"/><polygon points="18.9,43.8 21.5,45.8 20.5,48.9 16.4,48.3 16.8,45.1" fill="#353535"/><polygon points="26.4,45.3 23.9,47.7 21.4,46.8 21.9,43.4 25.0,43.1" fill="#2e2e2e"/><polygon points="32.9,47.0 30.3,48.1 28.4,45.9 29.0,43.8 31.5,42.3 33.8,43.7" fill="#2b2b2b"/><polygon points="37.9,43.9 38.0,46.6 36.9,48.0 34.0,47.9 33.1,45.7 33.8,44.0 36.4,42.6" fill="#6f6f6f"/><polygon points="38.7,45.0 41.8,43.3 43.3,44.1 43.9,47.5 41.8,48.2 39.3,47.4" fill="#5a5a5a"/><polygon points="46.2,48.4 44.8,47.1 44.9,44.3 46.8,42.8 49.3,44.0 50.0,46.5" fill="#393939"/><polygon points="55.1,46.3 53.7,48.6 50.6,47.1 50.0,44.0 52.9,43.1" fill="#383838"/><polygon points="61.0,43.8 62.1,46.4 60.8,48.0 59.2,48.5 57.0,47.4 56.4,44.6 58.1,43.6" fill="#313131"/><polygon points="61.9,46.4 62.7,43.3 65.7,42.4 66.6,44.0 67.5,46.9 66.0,47.6 63.5,48.1" fill="#121212"/><polygon points="7.7,50.5 9.3,48.3 12.5,48.4 14.0,50.7 11.8,53.0 9.4,53.1" fill="#0e0e0e"/><polygon points="12.7,50.9 15.0,48.5 18.2,50.7 17.2,53.5 15.8,54.7 13.0,53.7" fill="#161616"/><polygon points="22.3,48.1 24.7,51.1 23.7,53.4 20.2,53.4 19.0,50.9 20.5,48.7" fill="#494949"/><polygon points="25.9,47.6 28.7,48.1 29.8,49.9 29.5,52.1 27.8,53.4 25.5,52.3 24.8,49.9" fill="#4b4b4b"/><polygon points="31.1,51.1 33.3,48.9 35.2,49.1 36.7,52.1 34.3,53.8 32.0,53.7" fill="#2e2e2e"/><polygon points="37.4,49.2 39.5,48.3 42.4,50.4 42.0,52.9 39.6,53.8 36.8,51.9" fill="#242424"/><polygon points="45.9,47.8 47.8,50.2 45.8,52.6 43.8,53.0 42.2,50.1 42.9,48.0" fill="#3f3f3f"/><polygon points="47.7,52.1 48.2,50.4 50.9,49.2 52.9,49.6 52.6,53.7 51.0,54.2" fill="#222222"/><polygon points="53.2,53.2 52.2,51.2 54.1,48.9 56.4,48.9 58.1,51.4 56.7,53.8" fill="#262626"/><polygon points="64.3,51.5 63.1,53.7 60.6,54.5 58.3,52.0 59.0,50.0 62.8,49.4" fill="#0e0e0e"/><polygon points="17.2,53.3 19.9,53.1 21.7,55.0 20.4,57.4 18.7,57.9 15.9,55.8" fill="#2e2e2e"/><polygon points="24.3,54.0 26.1,55.5 25.8,58.2 22.7,59.5 21.2,57.9 21.5,55.3" fill="#282828"/><polygon points="32.9,58.0 30.5,59.5 29.1,59.2 28.0,56.6 28.4,54.2 31.1,54.0 32.6,54.7" fill="#1b1b1b"/><polygon points="37.9,55.5 36.5,57.2 35.1,58.0 32.4,55.7 33.6,53.5 35.3,52.0 37.6,52.7" fill="#2f2f2f"/><polygon points="45.4,54.4 42.7,57.2 40.2,56.6 39.9,53.3 43.4,52.6" fill="#2d2d2d"/><polygon points="46.5,53.8 49.3,53.5 51.0,55.7 50.8,57.9 47.7,59.1 46.2,57.8 45.1,56.2" fill="#3a3a3a"/><polygon points="55.1,53.7 56.8,56.4 54.2,58.8 50.8,57.1 52.3,53.8" fill="#101010"/><polygon points="56.1,53.3 57.8,52.3 61.3,54.2 60.6,56.7 57.9,58.2 55.6,56.5" fill="#151515"/><polygon points="22.7,59.2 25.1,61.8 23.5,64.0 19.4,63.0 19.9,60.0" fill="#1e1e1e"/><polygon points="27.7,62.6 24.8,61.9 24.7,58.9 26.7,56.9 29.2,59.7" fill="#2e2e2e"/><polygon points="30.7,58.4 32.7,57.5 36.1,59.3 35.4,61.4 33.2,62.8 30.3,61.3" fill="#2f2f2f"/><polygon points="41.0,58.8 41.8,61.6 41.2,63.7 37.7,63.7 36.5,60.9 38.7,58.8" fill="#121212"/><polygon points="42.2,58.4 44.9,57.2 46.9,58.3 47.5,61.8 45.6,62.2 43.1,61.7" fill="#282828"/><polygon points="50.9,64.3 48.3,61.7 49.2,59.5 52.1,59.1 53.6,62.7" fill="#191919"/><polygon points="32.4,63.5 33.3,65.4 34.0,67.8 30.9,68.9 28.9,67.7 28.7,64.6" fill="#121212"/><polygon points="34.1,67.2 34.4,64.5 36.9,63.2 38.9,65.1 38.9,67.0 36.1,68.2" fill="#1e1e1e"/><polygon points="38.7,65.1 40.8,63.2 42.8,64.7 43.3,67.0 41.4,69.0 38.8,68.7" fill="#151515"/></g></svg><div class="ic g" style="right:6.3px;top:8px">G</div><div class="l o" style="top:29px;letter-spacing:-0.06px;">1/3 Rotate</div></div>
<div class="c" style="left:503px;top:427px;width:99px;height:98px;background:#383842"><div class="s" style="background:#00858a"></div><div class="n">5</div><svg class="a" style="left:14px;top:22px" width="72" height="72" viewBox="0 0 72 72"><defs><clipPath id="gc4"><circle cx="36" cy="36" r="26.2"/></clipPath></defs><circle cx="36" cy="36" r="35.6" fill="#000"/><g clip-path="url(#gc4)" stroke="#fff" fill="none" stroke-linecap="round"><path d="M39.8 61.7l-0.1 1.2M36.4 62.5l-0.1 1.5M24.7 22.0l1.3 0.7M39.8 29.1l0.5 1.4M49.6 37.7l1.8 0.3M46.2 44.8l-0.4 3.2M55.3 44.1l1.5 0.9M29.3 18.6l-0.1 2.4M52.5 24.3l1.1 2.9M24.4 36.8l1.0 2.9M16.1 25.2l0.3 1.8M43.0 29.3l1.9 1.9M54.0 48.7l2.2 1.8M24.2 35.7l1.3 -0.2M17.4 32.6l-1.1 1.8M32.3 24.1l-0.0 1.5M51.5 37.2l1.0 1.6M48.6 14.4l-0.1 1.4M27.4 42.6l1.4 0.5M37.5 21.6l1.0 -0.1M37.4 20.6l0.3 1.5M21.1 45.5l-0.0 1.9M23.9 28.5l0.4 1.2M20.2 33.9l1.0 2.6M13.7 35.3l0.3 1.0M46.5 48.7l1.1 2.0M35.4 20.3l1.2 2.6M42.2 60.0l0.5 0.9M58.5 31.0l-0.3 1.4M53.3 32.7l0.6 1.0M21.3 24.5l0.9 0.9M20.4 27.3l0.5 1.2M15.0 44.4l1.1 1.5M27.9 45.7l1.3 0.7M27.8 38.9l1.4 1.9M51.8 38.3l1.9 0.5M57.7 50.4l1.1 2.3M39.9 48.1l1.9 1.0M35.2 14.7l-0.7 2.9M34.9 10.5l1.4 2.8M38.4 50.2l1.7 -0.5M58.8 27.2l1.7 1.3M17.7 17.7l1.1 2.6M41.4 51.2l2.5 1.9M44.5 23.9l1.8 2.2M25.7 12.5l-0.5 2.5M44.9 17.4l1.6 1.4M12.1 31.6l0.1 1.6M56.6 45.5l0.7 1.1M42.6 23.8l-0.1 1.6M42.3 18.3l1.2 1.5M19.2 55.9l-1.5 2.3M35.8 22.8l0.6 2.8M20.2 53.3l2.5 1.1M19.7 49.9l0.5 3.0M38.2 26.5l2.0 -1.2M32.9 28.8l3.0 0.2M43.2 32.4l0.6 2.3M50.2 19.9l1.6 2.6M49.6 19.4l0.6 1.7M47.3 14.9l1.0 1.4M31.4 51.2l1.6 0.6M27.1 34.9l0.7 1.1M35.5 52.5l1.6 1.1M37.7 27.8l0.6 1.3M36.0 27.3l0.1 1.1M14.6 28.2l0.3 1.7M52.8 20.6l1.8 1.0M12.3 26.1l-0.9 1.0M28.1 51.0l0.7 1.2M36.5 29.5l-0.1 2.3M13.9 49.1l1.8 1.3M56.3 20.6l1.8 1.1M19.7 54.1l2.1 -0.7M28.1 56.4l2.0 2.1M9.9 36.0l0.9 2.0M49.1 30.5l0.9 2.5M45.7 17.0l-0.2 1.3M32.1 39.1l1.7 0.4M29.4 16.2l-0.5 1.2M33.2 29.1l0.3 1.3M52.9 32.2l-0.3 2.4M44.5 34.1l0.8 2.2M21.3 14.2l0.8 1.6M56.2 29.0l1.1 1.1M25.7 47.7l0.8 1.6M41.8 20.8l0.7 1.1M29.8 11.8l0.9 1.4M48.5 38.6l1.6 1.5M29.2 56.2l0.3 2.7M40.7 13.7l2.1 1.9M30.0 59.8l1.3 1.5M23.1 22.4l1.6 1.6M34.7 20.1l1.8 1.5M18.5 40.9l2.1 1.4M40.7 45.0l0.1 2.8M56.0 48.5l1.1 2.1M35.5 60.9l1.1 0.9M39.8 39.4l0.9 1.4M58.5 32.7l2.0 1.7M17.2 26.3l-0.8 1.5M46.4 22.5l1.2 2.7M62.2 36.1l-0.1 2.1M58.4 34.1l0.4 3.1M50.3 26.4l0.8 2.4M56.6 29.5l0.4 1.7M18.4 23.7l0.7 1.3M42.6 37.2l-0.6 2.0M31.8 24.1l1.4 0.7M15.6 33.1l0.0 1.9M41.7 57.3l1.5 2.3M22.2 15.6l2.0 1.9M13.6 36.8l0.8 0.8M25.3 51.5l-0.6 2.9M25.8 12.9l-1.0 2.1M22.5 23.8l1.5 0.1M42.0 16.2l0.4 1.4M32.5 15.8l0.2 1.4M28.4 17.6l1.7 2.7M44.2 46.0l-0.2 2.3M49.6 14.5l1.2 0.4M17.5 52.1l-0.1 2.5M16.6 42.7l2.7 1.2M47.7 34.2l1.1 2.4M55.4 29.0l1.7 1.1M17.9 25.9l0.6 1.1M49.9 35.9l1.7 1.6M49.7 42.9l1.0 1.5M28.9 53.1l0.4 2.7M18.0 17.1l-0.1 3.1M18.1 38.6l0.9 2.0M25.1 16.9l2.1 0.0M19.2 35.1l2.4 1.4M40.9 43.7l0.9 2.9M13.9 34.6l-0.6 2.2M56.0 29.8l1.6 1.2M40.3 45.6l0.3 1.8M14.5 32.0l2.3 0.0M32.0 61.0l2.4 0.7M15.5 44.4l1.0 1.0M15.6 29.7l1.0 1.0M43.5 41.5l1.0 1.0M16.1 37.8l1.6 2.2M51.4 38.9l1.1 0.7M16.1 33.9l1.5 1.0M31.9 43.6l1.0 1.0M16.1 37.7l-0.3 1.0M48.5 48.6l-0.2 1.7M14.2 33.2l1.9 0.6M28.3 20.7l1.1 0.7M46.1 41.1l1.7 1.4M23.4 14.0l0.4 1.3M36.9 35.8l-1.1 1.4M41.7 18.0l2.2 0.2M52.1 15.9l1.7 2.5M14.9 22.3l0.2 1.5M42.2 27.4l0.7 3.0M22.6 47.4l0.2 1.6M51.7 44.0l2.1 1.5M26.4 60.4l1.4 2.7M28.6 32.0l2.2 1.0M15.9 46.2l2.2 2.3M34.4 30.9l1.8 1.2M41.6 33.7l0.9 0.5M34.5 27.7l-0.2 1.8M53.6 20.1l-0.6 2.4M31.2 41.9l-1.6 2.6M22.0 35.2l1.4 1.9M25.9 41.6l0.1 1.3M33.0 62.0l0.4 3.0M50.3 23.5l1.1 2.1M59.3 32.2l2.3 2.2M25.9 25.5l0.2 2.8M15.4 32.4l1.2 2.5M33.2 45.5l-0.1 1.1M28.6 14.7l2.2 1.6M45.4 46.2l1.0 1.4M50.3 33.2l2.8 0.9M47.8 49.5l-0.8 2.5M51.6 22.0l1.1 1.9M44.8 18.8l-0.4 0.9M30.2 60.2l0.8 0.9M56.1 37.9l2.6 1.7M20.5 20.2l2.1 -0.6M48.9 18.1l-0.0 1.1M28.2 49.2l-0.1 3.0M39.0 52.0l1.5 1.4M29.5 57.5l1.6 2.2M14.5 23.8l1.2 0.3M24.6 45.8l1.3 2.7M19.7 36.2l2.6 1.2M43.1 15.6l2.8 -0.1M20.7 29.7l1.1 1.4M11.4 35.9l0.2 1.5M25.5 44.5l1.5 1.9M51.9 16.3l0.8 1.6M47.0 55.8l0.5 1.0M28.1 21.7l1.6 1.5M13.1 26.2l0.2 1.1M33.2 29.1l0.6 2.8M21.4 23.9l0.7 1.0M14.9 24.3l-1.3 2.1M44.4 38.7l0.8 1.0M60.0 29.2l-0.7 2.1M51.1 21.2l0.2 1.0M11.6 46.0l0.1 1.9M27.8 22.4l1.9 2.3M24.4 43.3l1.5 1.2M49.6 42.9l1.0 1.7M38.3 60.0l2.5 1.5M35.0 36.6l2.4 0.3M37.2 44.5l0.1 2.9M54.3 45.9l1.4 1.4M53.2 15.9l0.7 0.9M49.2 38.6l-0.7 0.9M19.5 54.2l0.2 2.0M36.7 42.6l1.2 2.6M18.0 44.0l0.1 1.6M14.6 50.0l-0.2 1.7M16.4 47.1l-0.1 1.8M17.5 37.3l1.2 1.4M23.5 47.8l0.7 1.5M14.4 43.2l0.7 2.1M15.1 24.9l0.4 1.0M56.6 37.2l0.6 1.5M52.9 46.3l-0.2 1.7M11.4 38.0l1.6 0.2M43.0 51.3l0.3 1.6M34.7 26.9l1.0 1.6M38.1 45.8l1.0 0.9M44.3 35.3l-0.1 2.9M44.7 54.3l1.7 1.8M28.8 55.5l0.0 1.1M18.0 21.1l1.4 1.4M44.4 22.6l1.0 0.6M55.1 45.2l0.9 2.8M46.2 59.0l0.7 0.8M56.1 36.9l0.0 2.9M29.7 28.8l1.2 1.6M36.0 19.5l1.1 1.3M29.9 48.9l-0.6 1.7M41.7 49.6l0.4 1.0M16.1 39.8l2.5 2.0M42.9 45.5l1.7 1.4M23.6 43.6l1.2 1.9M29.8 19.9l1.9 0.9M46.6 35.2l2.5 1.0M43.6 40.8l0.5 1.5M30.0 25.5l-0.1 1.3M26.1 12.2l1.0 2.5M20.6 28.9l-0.1 2.1M30.7 52.1l1.2 2.8M26.6 45.7l1.1 -0.1M10.2 41.5l0.1 2.2M29.7 49.9l1.7 2.6M27.1 12.3l0.9 1.0M50.9 37.7l2.1 1.0M61.0 41.6l0.5 1.2M39.7 44.7l1.7 1.9M30.4 43.5l0.5 1.7M44.6 18.4l-0.3 2.1M13.2 33.3l0.3 1.3M28.6 13.9l0.1 1.5M29.4 10.4l2.1 2.3M23.5 27.6l0.5 2.4M48.3 20.4l1.6 2.1M15.9 45.6l0.4 1.2M40.2 44.2l-0.5 1.6M58.2 36.8l-0.4 1.0M26.4 36.4l1.9 1.2M61.8 38.1l1.4 1.3M29.0 53.1l0.7 1.8M50.6 33.0l-0.2 2.0M19.9 56.4l0.6 2.8M27.7 41.3l-0.6 3.0M25.6 43.5l1.9 0.9M13.6 32.2l-0.8 2.0M31.0 55.9l-0.6 1.0M45.2 18.9l0.9 2.0M39.9 23.6l1.0 2.9M21.3 24.0l0.0 2.5M24.8 46.9l1.2 1.8M43.8 33.5l1.1 1.5M57.7 45.6l0.9 2.3M58.0 30.5l1.1 0.8M28.1 39.5l-0.3 3.1M29.3 24.4l2.5 1.6M26.0 16.1l1.4 1.9M47.6 52.3l0.2 1.0M34.7 39.4l1.8 1.4M27.3 37.2l0.4 1.9M47.5 51.4l1.6 1.6M35.2 33.1l0.5 1.6M44.7 13.2l0.6 2.5M32.1 34.5l1.6 2.1M22.9 48.1l-0.2 1.7M18.8 33.1l2.2 0.7M23.2 15.1l-1.0 2.4M34.7 58.9l2.1 1.5M43.2 23.6l1.3 1.0M27.9 34.2l0.7 1.5M41.1 11.5l1.2 1.1M51.5 51.2l1.1 0.9M44.2 34.5l2.1 1.9M37.2 49.2l1.8 2.0M41.1 48.9l0.6 1.6M37.7 31.2l1.2 2.1M47.1 33.7l0.8 0.7M29.3 57.3l1.3 2.9M52.9 16.3l0.0 1.5M30.9 22.2l1.7 1.8M14.6 35.8l2.5 0.4M47.6 55.1l-0.4 1.7M39.0 37.9l-0.6 2.3M51.3 43.2l-0.8 2.8M56.5 39.2l0.7 2.3M11.6 26.9l1.7 1.3M38.3 49.8l-0.6 1.0M37.1 23.6l1.5 0.5M23.4 18.2l1.6 1.1M39.6 19.0l0.5 1.2M33.1 17.4l0.4 1.2M38.7 35.0l2.5 1.6M16.3 21.7l1.1 1.0M13.0 31.5l1.7 0.9M28.3 47.5l-0.3 2.5M41.3 35.6l0.6 1.2M16.2 35.3l0.8 2.4M53.1 53.5l0.4 1.8M11.9 33.7l-1.1 2.8M29.7 34.4l2.0 2.0M51.1 23.3l-0.3 1.2M32.8 53.0l0.3 1.7M33.2 18.2l0.3 2.2M29.6 57.6l1.9 2.3M46.3 44.3l0.6 1.0M43.3 12.5l2.7 0.6M52.2 15.9l0.6 2.3M32.0 33.1l0.4 2.1M47.6 31.4l-2.5 1.2M42.2 14.2l1.6 0.8M61.7 35.2l-1.1 0.6M51.1 43.7l0.7 1.2M36.1 27.8l-0.1 2.3M28.8 49.6l1.4 2.2M13.7 40.8l1.5 2.4M38.4 34.6l1.1 1.9M30.9 52.7l0.0 2.1M36.9 28.3l1.3 1.4M27.9 46.2l0.7 3.0M41.0 36.0l1.5 2.6M20.2 17.7l2.3 2.0M36.0 10.0l0.3 1.0M59.7 36.1l0.4 2.5M32.9 45.6l-0.1 3.2M55.9 36.2l0.3 2.5M36.0 46.5l-0.5 1.7M53.1 31.1l2.3 1.7M30.7 18.8l1.1 1.5M33.9 21.0l0.5 1.6M32.4 42.6l-0.1 2.4M47.4 18.9l1.6 1.0M43.7 26.0l0.6 1.1M37.3 52.0l2.4 -0.9M19.4 33.9l0.1 1.5M61.6 41.2l2.3 2.2M56.1 32.5l2.2 -0.3M23.3 53.4l1.1 1.1M24.5 35.3l1.0 2.3M38.8 29.8l-0.0 2.1M40.6 29.1l0.7 1.5M39.9 33.2l-0.6 2.4M24.1 29.1l0.6 1.0M29.3 35.7l1.8 1.4M40.9 53.9l-0.6 2.1M40.3 19.4l1.4 1.8M60.3 26.1l-0.7 2.6M47.1 20.4l0.6 1.1M24.0 42.6l0.9 0.9M53.1 30.0l1.3 2.4M23.2 25.3l1.3 0.3M25.4 12.3l2.9 1.2M30.5 33.5l2.0 2.4M36.5 45.3l1.1 0.6M16.4 27.7l3.2 0.1M48.3 50.9l0.7 1.8M46.0 42.0l1.4 0.9M56.5 44.7l1.8 2.3M49.9 56.4l3.1 0.3M40.1 35.0l-0.6 2.6M41.3 37.4l2.4 2.0M22.1 34.6l1.4 1.6M32.7 36.3l-0.1 2.6M48.2 16.1l0.9 0.6M28.1 16.5l2.2 1.9M50.2 44.0l2.4 1.3M16.6 52.6l-0.3 2.6M49.0 41.4l1.5 1.5M57.3 36.2l1.7 1.8M29.4 38.2l0.7 1.3M43.3 53.8l2.5 1.5M59.5 41.7l1.0 1.7M42.1 48.3l0.9 2.1M32.4 49.7l-2.8 1.2M33.8 60.3l0.5 0.9M57.6 22.1l1.1 2.7M32.8 35.2l1.5 1.3M43.9 27.7l1.4 2.1M40.0 39.9l0.1 1.2M35.3 18.6l0.3 2.1M40.0 55.8l0.3 1.3M27.9 58.8l0.7 1.5M40.9 53.7l-0.0 2.3M14.2 24.3l0.9 1.8M26.6 33.6l2.3 0.1M51.8 42.2l1.9 1.9M60.9 40.5l1.0 2.5M14.6 37.0l1.9 0.7M32.6 25.0l1.4 1.8M49.1 23.1l0.2 2.2M44.1 29.9l1.5 2.3M22.9 33.4l-0.7 2.7M31.7 35.7l-0.2 1.6M46.5 45.6l-0.6 2.6M48.0 47.3l0.4 1.9M44.1 43.1l1.3 0.9M34.9 49.3l0.4 2.3M51.0 30.5l0.5 2.1M42.5 51.3l0.5 1.2M56.6 23.8l0.0 1.4M53.3 39.6l1.3 0.6M54.9 19.7l-0.8 2.0M52.9 19.1l-0.5 3.1M13.9 45.1l-0.4 1.1M58.3 21.9l-1.5 2.1M24.8 22.6l1.0 1.7M26.5 41.8l0.0 3.1M49.3 44.4l0.8 2.1M41.3 11.4l2.5 1.6M32.1 55.5l1.5 1.3M22.4 44.1l3.0 -0.1M51.4 44.0l0.7 1.3M54.9 29.9l1.1 0.8M22.1 42.1l2.0 2.0M35.9 20.9l2.1 2.2M25.2 18.3l0.3 1.4M60.5 31.4l0.8 2.8M53.4 42.6l0.3 1.8M34.2 17.7l1.4 1.2M43.7 36.3l0.7 2.3M25.7 36.8l1.3 0.7M25.6 48.7l1.1 1.1M31.5 55.5l-0.5 1.7M45.0 56.3l-0.2 1.3M34.1 32.9l0.4 1.3M14.8 32.6l1.3 1.5M25.9 51.3l0.4 1.4M41.1 27.8l2.0 1.0M38.7 50.0l-0.2 1.2M58.9 33.7l1.1 2.8M11.4 38.2l0.2 2.6M25.9 33.4l0.1 1.6M35.6 30.9l-0.6 1.5M24.8 31.4l0.7 1.4M60.9 29.1l0.1 1.6M34.0 18.7l2.1 1.7M16.5 43.6l1.7 0.7M27.0 36.7l0.6 2.1M44.7 34.4l0.4 1.3M36.1 11.3l0.5 1.7M32.8 45.3l2.9 0.7M14.0 46.0l0.2 1.4M55.6 26.3l1.2 2.3M43.4 22.7l-0.3 2.6M45.6 30.4l0.5 2.6M57.9 30.9l0.7 2.9M16.3 38.4l2.2 1.3M46.8 38.0l0.8 1.4M33.6 46.5l0.2 1.2M20.6 53.4l1.0 2.5M42.3 48.6l1.6 2.6M34.4 18.3l0.5 1.5M35.4 36.5l0.0 1.4M19.3 51.8l0.4 2.7M36.6 24.7l-1.1 1.3M28.8 33.3l1.0 1.7M12.2 33.1l0.6 1.9M34.9 40.5l0.9 2.4M58.1 45.8l1.4 2.4M18.4 30.9l1.2 1.3M22.6 42.8l1.7 1.8M56.6 46.6l0.3 1.6M38.4 31.3l0.7 1.9M30.8 20.7l1.3 1.3M29.5 51.7l0.9 1.2M59.9 37.1l-0.1 1.9M40.1 54.8l1.2 -0.5M50.7 41.4l1.3 2.7M47.8 39.3l0.2 1.7M18.0 43.7l-1.3 2.8M20.5 19.6l1.8 2.4M16.4 29.8l0.4 1.8M19.1 47.4l0.7 0.9M25.8 60.1l1.0 1.1M31.2 39.6l2.5 1.3M24.7 59.8l-0.7 1.8M48.6 28.7l2.2 1.3M14.4 45.6l-1.7 1.2M52.9 20.8l1.3 2.9M20.0 40.0l-0.6 2.8M28.8 34.8l1.2 1.1M38.8 55.8l1.3 1.8M43.1 43.5l1.0 0.5M44.4 38.2l1.7 1.5M49.1 39.8l1.5 2.0M56.5 30.0l0.6 2.1M52.2 34.3l0.3 1.4M30.5 25.8l1.7 2.6M27.3 42.3l-0.8 2.2M17.8 25.6l1.0 1.1M19.1 51.2l0.1 2.3M24.7 30.2l1.3 0.8M51.3 55.1l2.5 1.5M26.2 25.0l1.2 0.4M28.3 33.8l-0.3 1.3M24.5 51.5l2.5 1.0M11.1 41.9l0.2 1.2M38.9 45.3l-0.2 1.6M18.6 50.0l-0.8 1.1M30.8 27.0l0.3 1.0M18.5 40.0l0.6 2.9M12.0 46.6l0.7 1.0M11.2 38.3l1.0 1.1M36.0 50.2l0.1 1.4M26.4 12.3l0.7 1.9M16.1 31.8l0.1 3.0M38.6 30.0l2.3 1.5M21.4 56.1l-0.3 1.1M27.7 52.4l0.2 1.0M57.6 28.3l-0.3 1.4M47.6 19.9l-0.5 1.4M44.6 30.6l1.2 -0.3M38.2 52.2l1.5 0.5M24.0 19.1l0.9 1.7M53.1 33.2l0.8 1.8M20.3 51.6l1.0 2.4M39.0 46.7l0.4 1.6M37.1 17.6l0.1 1.2M46.0 27.0l-0.8 2.1M37.9 47.1l0.9 1.8M47.0 20.1l1.9 1.7M40.4 10.1l2.4 0.8M22.2 29.9l0.2 1.6M26.8 48.8l0.5 0.9M36.9 19.2l0.6 2.7M56.3 34.2l0.1 2.2M57.0 47.6l-1.1 2.1M25.1 46.9l2.2 1.7M37.4 39.7l-1.2 2.9M47.4 47.9l1.2 2.7M23.6 37.0l0.1 1.1M19.5 32.0l1.8 -1.0M22.8 26.4l2.8 1.2M19.9 55.2l0.9 2.9M21.3 18.7l0.5 2.2M26.6 36.4l2.2 1.7M51.9 42.8l1.2 0.3M32.6 33.1l0.8 2.2M33.1 10.5l-1.3 2.9M33.7 61.4l0.9 2.7M31.0 53.1l1.9 1.3M35.1 45.0l1.6 0.0M22.5 40.0l1.0 0.6M57.8 37.0l0.9 1.7M56.4 20.3l1.8 2.3M52.8 19.8l0.9 2.7M52.3 36.2l1.6 1.2M28.8 53.7l2.6 0.5M43.8 48.8l0.6 1.3M52.1 38.1l0.3 1.5M44.3 13.2l0.5 1.9M25.9 21.6l-0.5 3.0M19.9 15.7l0.3 1.3M48.3 14.7l1.9 0.9M38.5 19.8l0.8 1.4M52.3 40.2l1.7 0.8M17.6 20.8l1.0 0.9M55.5 51.7l-0.8 2.9M32.6 49.0l1.2 2.1M48.1 55.7l2.4 1.9M39.4 43.7l1.0 1.1M11.9 44.6l-0.7 2.2M26.1 38.6l1.4 1.0M21.4 39.9l2.1 1.8M18.2 26.9l0.5 2.8M47.3 28.8l0.1 2.1M13.0 45.3l1.6 1.0M12.0 32.7l1.1 0.8M61.3 42.7l0.4 3.1M18.3 16.5l1.0 1.2M48.6 33.4l1.0 1.6M57.2 51.3l1.6 1.3M24.8 33.0l2.4 1.8M22.1 43.8l0.1 1.1M26.8 20.1l0.9 0.6M29.3 56.4l1.7 0.4M33.1 23.9l1.5 1.0M40.2 17.2l0.6 3.0M12.2 43.2l1.2 2.0M37.7 34.6l1.3 1.2M41.8 53.8l1.6 1.6M14.8 26.1l0.8 1.2M16.6 52.2l2.0 2.0M49.7 18.2l1.1 1.0M14.9 40.3l1.2 0.9M18.1 51.7l1.5 2.2M33.3 35.4l1.4 0.6M17.6 42.5l0.2 1.4M42.5 47.9l-0.8 0.8M24.0 14.3l1.3 1.4M23.9 24.7l-0.4 1.8M10.9 43.0l1.8 2.0M50.9 55.3l2.9 0.7M30.8 18.5l-0.2 1.6M16.8 51.6l2.4 2.0M40.3 32.6l0.2 2.9M18.2 20.0l-2.0 2.4M40.1 55.0l-1.6 1.3M38.3 15.1l0.9 2.2M28.7 45.6l1.9 2.5M38.1 55.9l0.0 1.5M25.0 31.8l1.1 0.8M46.3 49.1l-2.0 2.4M35.7 36.3l2.6 0.8M32.2 11.0l-1.7 2.3M38.3 34.3l1.1 2.8M50.4 49.0l1.3 1.5M37.2 35.4l-0.5 2.7M22.2 29.9l0.6 2.6M18.6 40.9l2.2 2.0M37.4 23.4l0.0 1.4M53.7 35.8l0.6 2.9M60.6 34.5l1.3 1.5M37.0 58.3l0.6 2.6M50.9 30.2l1.1 2.2M44.7 58.5l1.7 0.4M13.6 41.4l-1.6 2.7M60.1 33.3l1.0 1.4M29.1 59.8l0.1 1.2M21.9 51.0l-0.1 1.6M30.1 22.3l0.2 3.0M45.2 28.6l0.7 1.1M15.1 22.2l0.8 0.6M52.5 39.9l1.3 1.3M38.2 36.6l2.0 0.8M45.7 18.4l2.2 1.1M10.2 32.9l-0.2 2.8M30.8 27.7l2.1 2.2M35.6 54.6l2.4 1.3M33.9 15.4l1.5 2.8M35.6 14.7l1.2 2.3M46.9 14.8l0.9 1.1M61.7 40.0l2.8 0.8M43.7 44.0l0.4 1.5M22.8 50.4l0.6 2.6M46.5 38.4l2.3 1.7M50.3 51.2l1.4 2.6M33.8 26.2l1.3 1.1M42.8 40.8l0.2 1.4M35.9 36.2l0.0 1.2M40.3 24.9l0.3 1.6M15.0 34.4l-1.0 2.3M14.7 38.9l3.0 1.2M31.7 24.8l1.0 2.7M22.3 50.6l0.9 0.8M25.6 19.7l0.9 1.3M29.7 35.4l0.4 2.9M34.7 42.6l-0.8 1.9M35.4 47.3l0.1 1.6M24.5 59.8l1.0 2.2M41.5 11.1l2.8 1.4M39.5 15.3l2.2 -0.0M37.3 12.8l0.5 2.1M40.1 24.1l0.0 2.7M48.9 28.2l0.3 3.0M57.2 28.8l0.1 1.7M51.2 51.7l0.2 3.2M45.6 25.5l0.9 2.3M25.6 37.6l-0.2 3.0M18.4 28.5l0.6 0.8M40.4 19.5l1.0 1.0M50.1 44.3l1.7 0.1M20.5 16.1l-0.3 1.3M16.5 46.7l0.5 2.1M17.9 52.0l1.0 3.0M46.7 22.2l0.1 2.7M18.8 32.1l1.9 -0.7M32.0 57.4l1.2 2.6M48.2 39.3l0.6 1.6M17.4 50.4l0.5 2.3M50.0 24.0l1.0 1.9M45.1 39.4l1.2 0.6M62.4 37.0l0.6 2.7M28.7 40.0l-0.9 2.4M55.1 23.9l0.6 1.1M25.5 56.8l1.1 0.8M49.1 13.1l-0.8 0.9M52.1 50.8l1.8 1.4M19.2 23.1l0.9 0.8M14.2 47.7l1.1 1.1M21.8 42.0l2.1 -0.6M58.1 37.9l2.6 1.8M26.4 33.3l-0.2 2.6M40.2 43.2l-0.1 1.1M18.5 18.9l0.6 2.2M17.8 39.1l-0.7 2.2M17.2 17.5l0.9 1.1M24.6 22.4l0.6 1.2M42.9 38.7l2.6 0.7M59.5 39.8l0.5 3.0M47.9 36.7l0.2 2.6M59.9 36.6l1.7 2.3M37.9 33.0l-0.8 2.9M46.6 27.7l-0.7 1.4M28.9 34.5l0.9 2.4M50.8 54.1l1.3 1.6M54.5 34.0l0.3 2.7M23.4 32.4l0.9 0.9M46.8 40.5l1.0 1.0M53.8 32.2l1.9 2.5M40.2 37.1l1.1 0.8M27.3 39.5l0.8 1.8M33.3 27.8l0.5 1.6M19.0 43.9l2.2 0.9M50.3 37.0l-0.4 1.8M36.3 47.9l-0.7 2.9M39.4 45.4l-0.9 1.0M29.3 60.8l0.3 1.8M43.5 27.8l1.2 1.1M55.5 35.4l1.0 2.0M35.6 34.2l0.5 1.2M37.4 44.8l1.5 0.7M31.6 31.0l0.2 1.2M20.9 47.3l0.3 1.5M17.9 32.8l1.7 1.2M41.4 27.4l1.1 1.6M54.9 30.4l-0.0 1.6M29.4 42.6l2.0 0.9M15.3 22.0l0.3 3.0M58.8 39.0l2.1 1.3M34.9 32.6l1.3 0.7M25.8 41.3l2.1 2.0M26.3 37.0l1.7 0.5M43.2 16.6l1.5 2.3M18.7 41.8l0.6 3.0M40.0 55.5l2.3 0.7M41.4 60.5l1.2 2.5M46.9 26.5l1.1 1.8M53.6 32.8l0.5 1.7M60.0 35.1l1.1 0.4" stroke-width=".62"/></g></svg><div class="ic g" style="right:6.3px;top:8px">G</div><div class="l o" style="top:29px;letter-spacing:-0.06px;">1/4 Rotate</div></div>
<div class="c" style="left:603px;top:427px;width:100px;height:98px;background:#383842"><div class="s" style="background:#00858a"></div><div class="n">6</div><svg class="a" style="left:14px;top:22px" width="72" height="72" viewBox="0 0 72 72"><defs><clipPath id="gc5"><circle cx="36" cy="36" r="27"/></clipPath></defs><circle cx="36" cy="36" r="35.6" fill="#000"/><g clip-path="url(#gc5)" stroke="#fff" fill="none" stroke-linecap="round"><path d="M19.7 17.4Q20.6 36 19.9 57.1M21.7 14.0Q22.6 36 22.1 58.7M23.5 12.3Q24.0 36 23.3 59.5M25.2 11.4Q26.3 36 25.1 58.8M27.0 12.7Q28.1 36 27.2 59.1M29.1 11.1Q30.5 36 29.6 61.8M31.0 12.6Q32.6 36 31.4 62.0M32.9 10.3Q34.3 36 33.0 59.9M34.6 12.6Q36.2 36 34.3 62.4M36.6 11.2Q37.3 36 36.9 59.8M38.6 12.7Q39.1 36 38.9 61.4M40.4 9.8Q41.4 36 40.9 62.6M42.1 13.1Q42.5 36 41.9 60.8M43.8 11.6Q44.3 36 44.2 58.8M45.5 10.9Q46.4 36 45.6 60.9M47.4 12.7Q48.4 36 47.6 59.1M49.5 14.2Q50.7 36 49.4 57.5M51.2 13.7Q52.2 36 50.9 56.8M53.0 16.2Q54.1 36 53.2 54.1" stroke-width=".85"/><path d="M10.5 28.1Q11.3 36 10.7 44.3M12.4 24.6Q13.8 36 12.3 47.3M14.1 20.3Q15.5 36 14.1 50.6M16.0 20.0Q17.4 36 16.1 53.2M18.0 16.8Q19.3 36 18.1 53.5M54.5 17.4Q55.7 36 54.5 54.2M56.4 19.0Q56.9 36 56.7 51.2M58.6 22.7Q59.7 36 58.5 49.7M60.3 25.4Q61.4 36 60.3 46.7" stroke-width=".8" opacity=".7"/><path d="M26.8 13Q27.8 36 26.8 60M28.3 13Q29.3 36 28.3 60M33.0 13Q34.0 36 33.0 60M37.5 13Q38.5 36 37.5 60" stroke-width="1.1" opacity=".8"/></g></svg><div class="ic g" style="right:6.3px;top:8px">G</div><div class="l o" style="top:29px;letter-spacing:-0.06px;">1/5 Rotate</div></div>
<div class="c" style="left:704px;top:427px;width:99px;height:98px;background:#131316"><div class="s" style="background:#012b2d"></div><div class="n ne">7</div></div>
<div class="c" style="left:804px;top:427px;width:99px;height:98px;background:#383842"><div class="s" style="background:#00858a"></div><div class="n">8</div><div class="ic g" style="right:6.3px;top:8px">G</div><div class="l" style="top:29px;padding-top:1.8px;letter-spacing:-0.31px;">Rotate
Left</div></div>
<div class="c" style="left:904px;top:427px;width:100px;height:98px;background:#383842"><div class="s" style="background:#00858a"></div><div class="n">9</div><div class="ic g" style="right:6.3px;top:8px">G</div><div class="l" style="top:29px;letter-spacing:-0.26px;">Stop</div></div>
<div class="c" style="left:1005px;top:427px;width:96px;height:98px;background:#383842;border-radius:0 9px 9px 0"><div class="s" style="background:#00858a"></div><div class="n">10</div><div class="ic g" style="right:6.3px;top:8px">G</div><div class="l" style="top:29px;padding-top:1.8px;letter-spacing:-0.31px;">Rotate
Right</div><svg class="a" style="right:0;bottom:0" width="32" height="32" viewBox="0 0 32 32"><g stroke="#000" stroke-width="2.5"><path d="M16 22L23.5 14.5"/><path d="M19.3 25.3L26.8 17.8"/><path d="M22.6 28.6L30.1 21.1"/></g></svg></div>
<div class="t" style="top:533px;height:98px;background:#00858a"><div class="ma" style="left:4px;top:13px;color:#00858a"><b><span>M</span></b><b><span>A</span></b></div><svg class="a" style="left:62px;top:13.7px" width="22.5" height="22.5" viewBox="0 0 22.5 22.5"><g fill="#80ff80"><circle cx="11.1" cy="1.5" r="1.5"/><path d="M3.6 5.3 C5.5 2.6 8.5 1.6 11.1 1.6 C13.7 1.6 16.7 2.6 18.7 5.3 Z"/><rect x="0" y="7" width="22.3" height="2.4" rx=".6"/><path d="M2 9.3 H20.2 V18 Q20.2 19.9 18.3 19.9 H3.9 Q2 19.9 2 18 Z"/><rect x="0" y="20.9" width="22.5" height="1.6" rx=".5"/></g><g fill="none" stroke="#00858a" stroke-width="1" stroke-linecap="round"><path d="M8.3 10.8 q1.2 1.8 -.6 3.2 q-1.6 1.3 -.9 2.6"/><path d="M12.2 10.2 q1.3 1.9 -.7 3.6 q-1.7 1.4 -1 2.8"/><path d="M15.9 10.8 q1.2 1.8 -.6 3.2 q-1.6 1.3 -.9 2.6"/></g></svg><div class="ic g" style="left:72.3px;top:2.2px;transform-origin:0 50%">G</div><svg class="a" style="left:81.6px;top:1.6px" width="12" height="13" viewBox="0 0 12 13"><path d="M6 .2A5.3 5.3 0 0 1 8.9 9.9V12.6H3.3V9.9A5.3 5.3 0 0 1 6 .2Z" fill="#fff"/><path d="M5.6 1.5A4.1 4.1 0 0 0 5.6 9.3Z" fill="rgba(0,70,73,.9)"/></svg><div class="tl" style="top:48.9px;letter-spacing:0.36px;">4
Color</div></div>
<div class="c" style="left:102px;top:533px;width:99px;height:98px;background:#383842"><div class="s" style="background:#00858a"></div><div class="n">1</div><div class="circ" style="left:14.2px;top:22.5px;width:70px;height:70px;background:#ededed"></div><div class="ic g" style="right:6.3px;top:8px">G</div><svg class="a" style="right:17px;top:8px" width="13" height="13" viewBox="0 0 13 13"><g fill="#000" opacity=".75" transform="translate(-.6,.7)"><rect x="4.9" y="0" width="2.3" height="6"/><path d="M1.7 5.4H10.4L6.05 10.1Z"/><rect x=".4" y="10.3" width="11.6" height="1.4"/></g><g fill="#00ffff"><rect x="4.9" y="0" width="2.3" height="6"/><path d="M1.7 5.4H10.4L6.05 10.1Z"/><rect x=".4" y="10.3" width="11.6" height="1.4"/></g></svg><div class="l o" style="top:29px;letter-spacing:-0.29px;;color:#f4f4f4;-webkit-text-stroke-color:rgba(0,0,0,.62)">White</div></div>
<div class="c" style="left:202px;top:533px;width:99px;height:98px;background:#383842"><div class="s" style="background:#00858a"></div><div class="n">2</div><div class="circ" style="left:14.2px;top:22.5px;width:70px;height:70px;background:#ed1c1c"></div><div class="ic g" style="right:6.3px;top:8px">G</div><svg class="a" style="right:17px;top:8px" width="13" height="13" viewBox="0 0 13 13"><g fill="#000" opacity=".75" transform="translate(-.6,.7)"><rect x="4.9" y="0" width="2.3" height="6"/><path d="M1.7 5.4H10.4L6.05 10.1Z"/><rect x=".4" y="10.3" width="11.6" height="1.4"/></g><g fill="#00ffff"><rect x="4.9" y="0" width="2.3" height="6"/><path d="M1.7 5.4H10.4L6.05 10.1Z"/><rect x=".4" y="10.3" width="11.6" height="1.4"/></g></svg><div class="l o" style="top:29px;letter-spacing:-1.00px;">Red</div></div>
<div class="c" style="left:302px;top:533px;width:100px;height:98px;background:#383842"><div class="s" style="background:#00858a"></div><div class="n">3</div><div class="circ" style="left:14.2px;top:22.5px;width:70px;height:70px;background:#d41ced"></div><div class="ic g" style="right:6.3px;top:8px">G</div><div class="l o" style="top:29px;letter-spacing:-0.15px;">Magenta</div></div>
<div class="c" style="left:403px;top:533px;width:99px;height:98px;background:#383842"><div class="s" style="background:#00858a"></div><div class="n">4</div><div class="circ" style="left:14.2px;top:22.5px;width:70px;height:70px;background:#2026ed"></div><div class="ic g" style="right:6.3px;top:8px">G</div><svg class="a" style="right:17px;top:8px" width="13" height="13" viewBox="0 0 13 13"><g fill="#000" opacity=".75" transform="translate(-.6,.7)"><rect x="4.9" y="0" width="2.3" height="6"/><path d="M1.7 5.4H10.4L6.05 10.1Z"/><rect x=".4" y="10.3" width="11.6" height="1.4"/></g><g fill="#00ffff"><rect x="4.9" y="0" width="2.3" height="6"/><path d="M1.7 5.4H10.4L6.05 10.1Z"/><rect x=".4" y="10.3" width="11.6" height="1.4"/></g></svg><div class="l o" style="top:29px;letter-spacing:-0.46px;">Blue</div></div>
<div class="c" style="left:503px;top:533px;width:99px;height:98px;background:#383842"><div class="s" style="background:#00858a"></div><div class="n">5</div><div class="circ" style="left:14.2px;top:22.5px;width:70px;height:70px;background:#1cecec"></div><div class="ic g" style="right:6.3px;top:8px">G</div><div class="l o" style="top:29px;letter-spacing:-0.76px;">Cyan</div></div>
<div class="c" style="left:603px;top:533px;width:100px;height:98px;background:#383842"><div class="s" style="background:#00858a"></div><div class="n">6</div><div class="circ" style="left:14.2px;top:22.5px;width:70px;height:70px;background:#30ec1c"></div><div class="ic g" style="right:6.3px;top:8px">G</div><div class="l o" style="top:29px;letter-spacing:-0.77px;">Green</div></div>
<div class="c" style="left:704px;top:533px;width:99px;height:98px;background:#383842"><div class="s" style="background:#00858a"></div><div class="n">7</div><div class="circ" style="left:14.2px;top:22.5px;width:70px;height:70px;background:#eee01c"></div><div class="ic g" style="right:6.3px;top:8px">G</div><svg class="a" style="right:17px;top:8px" width="13" height="13" viewBox="0 0 13 13"><g fill="#000" opacity=".75" transform="translate(-.6,.7)"><rect x="4.9" y="0" width="2.3" height="6"/><path d="M1.7 5.4H10.4L6.05 10.1Z"/><rect x=".4" y="10.3" width="11.6" height="1.4"/></g><g fill="#00ffff"><rect x="4.9" y="0" width="2.3" height="6"/><path d="M1.7 5.4H10.4L6.05 10.1Z"/><rect x=".4" y="10.3" width="11.6" height="1.4"/></g></svg><div class="l o" style="top:29px;letter-spacing:-0.24px;">Yellow</div></div>
<div class="c" style="left:804px;top:533px;width:99px;height:98px;background:#383842"><div class="s" style="background:#00858a"></div><div class="n">8</div><div class="circ" style="left:14.2px;top:22.5px;width:70px;height:70px;background:#ee921c"></div><div class="ic g" style="right:6.3px;top:8px">G</div><div class="l o" style="top:29px;letter-spacing:-0.60px;">Orange</div></div>
<div class="c" style="left:904px;top:533px;width:100px;height:98px;background:#131316"><div class="s" style="background:#012b2d"></div><div class="n ne">9</div></div>
<div class="c" style="left:1005px;top:533px;width:96px;height:98px;background:#131316;border-radius:0 9px 9px 0"><div class="s" style="background:#012b2d"></div><div class="n ne">10</div><svg class="a" style="right:0;bottom:0" width="32" height="32" viewBox="0 0 32 32"><path d="M32 0V32H0Z" fill="#383842"/><g stroke="#000" stroke-width="2.5"><path d="M16 22L23.5 14.5"/><path d="M19.3 25.3L26.8 17.8"/><path d="M22.6 28.6L30.1 21.1"/></g></svg></div>
<div class="t" style="top:639px;height:98px;background:#00858a"><div class="ma" style="left:4px;top:13px;color:#00858a"><b><span>M</span></b><b><span>A</span></b></div><svg class="a" style="left:62px;top:13.7px" width="22.5" height="22.5" viewBox="0 0 22.5 22.5"><g fill="#80ff80"><circle cx="11.1" cy="1.5" r="1.5"/><path d="M3.6 5.3 C5.5 2.6 8.5 1.6 11.1 1.6 C13.7 1.6 16.7 2.6 18.7 5.3 Z"/><rect x="0" y="7" width="22.3" height="2.4" rx=".6"/><path d="M2 9.3 H20.2 V18 Q20.2 19.9 18.3 19.9 H3.9 Q2 19.9 2 18 Z"/><rect x="0" y="20.9" width="22.5" height="1.6" rx=".5"/></g><g fill="none" stroke="#00858a" stroke-width="1" stroke-linecap="round"><path d="M8.3 10.8 q1.2 1.8 -.6 3.2 q-1.6 1.3 -.9 2.6"/><path d="M12.2 10.2 q1.3 1.9 -.7 3.6 q-1.7 1.4 -1 2.8"/><path d="M15.9 10.8 q1.2 1.8 -.6 3.2 q-1.6 1.3 -.9 2.6"/></g></svg><div class="ic g" style="left:72.3px;top:2.2px;transform-origin:0 50%">G</div><svg class="a" style="left:81.6px;top:1.6px" width="12" height="13" viewBox="0 0 12 13"><path d="M6 .2A5.3 5.3 0 0 1 8.9 9.9V12.6H3.3V9.9A5.3 5.3 0 0 1 6 .2Z" fill="#fff"/><path d="M5.6 1.5A4.1 4.1 0 0 0 5.6 9.3Z" fill="rgba(0,70,73,.9)"/></svg><div class="tl" style="top:48.9px;letter-spacing:0.39px;">5
Beam</div></div>
<div class="c" style="left:102px;top:639px;width:99px;height:98px;background:#383842"><div class="s" style="background:#00858a"></div><div class="n">1</div><div class="ic g" style="right:6.3px;top:8px">G</div><div class="l" style="top:29px;padding-top:1.8px;letter-spacing:-0.22px;">Shutter
Open</div></div>
<div class="c" style="left:202px;top:639px;width:99px;height:98px;background:#383842"><div class="s" style="background:#00858a"></div><div class="n">2</div><div class="ic g" style="right:6.3px;top:8px">G</div><div class="l" style="top:29px;padding-top:1.8px;letter-spacing:-0.22px;">Shutter
Closed</div></div>
<div class="c" style="left:302px;top:639px;width:100px;height:98px;background:#383842"><div class="s" style="background:#00858a"></div><div class="n">3</div><div class="ic g" style="right:6.3px;top:8px">G</div><div class="l" style="top:29px;padding-top:1.8px;letter-spacing:-0.30px;">Strobe
Slow</div></div>
<div class="c" style="left:403px;top:639px;width:99px;height:98px;background:#383842"><div class="s" style="background:#00858a"></div><div class="n">4</div><div class="ic g" style="right:6.3px;top:8px">G</div><div class="l" style="top:29px;letter-spacing:-0.20px;">Strobe Mid</div></div>
<div class="c" style="left:503px;top:639px;width:99px;height:98px;background:#383842"><div class="s" style="background:#00858a"></div><div class="n">5</div><div class="ic g" style="right:6.3px;top:8px">G</div><div class="l" style="top:29px;padding-top:1.8px;letter-spacing:-0.30px;">Strobe
Fast</div></div>
<div class="c" style="left:603px;top:639px;width:100px;height:98px;background:#383842"><div class="s" style="background:#00858a"></div><div class="n">6</div><div class="ic g" style="right:6.3px;top:8px">G</div><div class="l" style="top:29px;padding-top:1.8px;letter-spacing:-0.45px;left:-12.2px;right:-7.800000000000001px;">Random
Mid</div></div>
<div class="c" style="left:704px;top:639px;width:99px;height:98px;background:#383842"><div class="s" style="background:#00858a"></div><div class="n">7</div><div class="ic g" style="right:6.3px;top:8px">G</div><div class="l" style="top:29px;padding-top:1.8px;letter-spacing:-0.45px;left:-11.7px;right:-8.3px;">Random
Fast</div></div>
<div class="c" style="left:804px;top:639px;width:99px;height:98px;background:#383842"><div class="s" style="background:#00858a"></div><div class="n">8</div><div class="ic g" style="right:6.3px;top:8px">G</div><div class="l" style="top:29px;letter-spacing:-0.24px;left:-12.7px;right:-7.300000000000001px;">Iris Closed</div></div>
<div class="c" style="left:904px;top:639px;width:100px;height:98px;background:#383842"><div class="s" style="background:#00858a"></div><div class="n">9</div><div class="ic g" style="right:6.3px;top:8px">G</div><div class="l" style="top:29px;letter-spacing:-0.41px;">Iris Open</div></div>
<div class="c" style="left:1005px;top:639px;width:96px;height:98px;background:#131316;border-radius:0 9px 9px 0"><div class="s" style="background:#012b2d"></div><div class="n ne">10</div><svg class="a" style="right:0;bottom:0" width="32" height="32" viewBox="0 0 32 32"><path d="M32 0V32H0Z" fill="#383842"/><g stroke="#000" stroke-width="2.5"><path d="M16 22L23.5 14.5"/><path d="M19.3 25.3L26.8 17.8"/><path d="M22.6 28.6L30.1 21.1"/></g></svg></div>
<div class="t" style="top:745px;height:98px;background:#00858a"><div class="ma" style="left:4px;top:13px;color:#00858a"><b><span>M</span></b><b><span>A</span></b></div><svg class="a" style="left:62px;top:13.7px" width="22.5" height="22.5" viewBox="0 0 22.5 22.5"><g fill="#80ff80"><circle cx="11.1" cy="1.5" r="1.5"/><path d="M3.6 5.3 C5.5 2.6 8.5 1.6 11.1 1.6 C13.7 1.6 16.7 2.6 18.7 5.3 Z"/><rect x="0" y="7" width="22.3" height="2.4" rx=".6"/><path d="M2 9.3 H20.2 V18 Q20.2 19.9 18.3 19.9 H3.9 Q2 19.9 2 18 Z"/><rect x="0" y="20.9" width="22.5" height="1.6" rx=".5"/></g><g fill="none" stroke="#00858a" stroke-width="1" stroke-linecap="round"><path d="M8.3 10.8 q1.2 1.8 -.6 3.2 q-1.6 1.3 -.9 2.6"/><path d="M12.2 10.2 q1.3 1.9 -.7 3.6 q-1.7 1.4 -1 2.8"/><path d="M15.9 10.8 q1.2 1.8 -.6 3.2 q-1.6 1.3 -.9 2.6"/></g></svg><div class="ic r" style="left:72.5px;top:2px">S</div><svg class="a" style="left:81.6px;top:1.6px" width="12" height="13" viewBox="0 0 12 13"><path d="M6 .2A5.3 5.3 0 0 1 8.9 9.9V12.6H3.3V9.9A5.3 5.3 0 0 1 6 .2Z" fill="#fff"/><path d="M5.6 1.5A4.1 4.1 0 0 0 5.6 9.3Z" fill="rgba(0,70,73,.9)"/></svg><div class="tl" style="top:48.9px;letter-spacing:0.45px;">6
Focus</div></div>
<div class="c" style="left:102px;top:745px;width:99px;height:98px;background:#383842"><div class="s" style="background:#00858a"></div><div class="n">1</div><div class="ic r" style="right:6px;top:8px">S</div><svg class="a" style="right:17px;top:8px" width="13" height="13" viewBox="0 0 13 13"><g fill="#000" opacity=".75" transform="translate(-.6,.7)"><rect x="4.9" y="0" width="2.3" height="6"/><path d="M1.7 5.4H10.4L6.05 10.1Z"/><rect x=".4" y="10.3" width="11.6" height="1.4"/></g><g fill="#00ffff"><rect x="4.9" y="0" width="2.3" height="6"/><path d="M1.7 5.4H10.4L6.05 10.1Z"/><rect x=".4" y="10.3" width="11.6" height="1.4"/></g></svg><div class="l" style="top:29px;padding-top:1.8px;letter-spacing:-0.15px;">Zoom
Narrow</div></div>
<div class="c" style="left:202px;top:745px;width:99px;height:98px;background:#383842"><div class="s" style="background:#00858a"></div><div class="n">2</div><div class="ic r" style="right:6px;top:8px">S</div><div class="l" style="top:29px;letter-spacing:-0.04px;">Zoom Mid</div></div>
<div class="c" style="left:302px;top:745px;width:100px;height:98px;background:#383842"><div class="s" style="background:#00858a"></div><div class="n">3</div><div class="ic r" style="right:6px;top:8px">S</div><svg class="a" style="right:17px;top:8px" width="13" height="13" viewBox="0 0 13 13"><g fill="#000" opacity=".75" transform="translate(-.6,.7)"><rect x="4.9" y="0" width="2.3" height="6"/><path d="M1.7 5.4H10.4L6.05 10.1Z"/><rect x=".4" y="10.3" width="11.6" height="1.4"/></g><g fill="#00ffff"><rect x="4.9" y="0" width="2.3" height="6"/><path d="M1.7 5.4H10.4L6.05 10.1Z"/><rect x=".4" y="10.3" width="11.6" height="1.4"/></g></svg><div class="l" style="top:29px;letter-spacing:-0.30px;">Zoom Wide</div></div>
<div class="c" style="left:403px;top:745px;width:99px;height:98px;background:#131316"><div class="s" style="background:#012b2d"></div><div class="n ne">4</div></div>
<div class="c" style="left:503px;top:745px;width:99px;height:98px;background:#131316"><div class="s" style="background:#012b2d"></div><div class="n ne">5</div></div>
<div class="c" style="left:603px;top:745px;width:100px;height:98px;background:#131316"><div class="s" style="background:#012b2d"></div><div class="n ne">6</div></div>
<div class="c" style="left:704px;top:745px;width:99px;height:98px;background:#131316"><div class="s" style="background:#012b2d"></div><div class="n ne">7</div></div>
<div class="c" style="left:804px;top:745px;width:99px;height:98px;background:#131316"><div class="s" style="background:#012b2d"></div><div class="n ne">8</div></div>
<div class="c" style="left:904px;top:745px;width:100px;height:98px;background:#131316"><div class="s" style="background:#012b2d"></div><div class="n ne">9</div></div>
<div class="c" style="left:1005px;top:745px;width:96px;height:98px;background:#131316;border-radius:0 9px 9px 0"><div class="s" style="background:#012b2d"></div><div class="n ne">10</div><svg class="a" style="right:0;bottom:0" width="32" height="32" viewBox="0 0 32 32"><path d="M32 0V32H0Z" fill="#383842"/><g stroke="#000" stroke-width="2.5"><path d="M16 22L23.5 14.5"/><path d="M19.3 25.3L26.8 17.8"/><path d="M22.6 28.6L30.1 21.1"/></g></svg></div>
<div class="t" style="top:851px;height:96px;background:#00858a"><div class="ma" style="left:4px;top:13px;color:#00858a"><b><span>M</span></b><b><span>A</span></b></div><svg class="a" style="left:62px;top:13.7px" width="22.5" height="22.5" viewBox="0 0 22.5 22.5"><g fill="#80ff80"><circle cx="11.1" cy="1.5" r="1.5"/><path d="M3.6 5.3 C5.5 2.6 8.5 1.6 11.1 1.6 C13.7 1.6 16.7 2.6 18.7 5.3 Z"/><rect x="0" y="7" width="22.3" height="2.4" rx=".6"/><path d="M2 9.3 H20.2 V18 Q20.2 19.9 18.3 19.9 H3.9 Q2 19.9 2 18 Z"/><rect x="0" y="20.9" width="22.5" height="1.6" rx=".5"/></g><g fill="none" stroke="#00858a" stroke-width="1" stroke-linecap="round"><path d="M8.3 10.8 q1.2 1.8 -.6 3.2 q-1.6 1.3 -.9 2.6"/><path d="M12.2 10.2 q1.3 1.9 -.7 3.6 q-1.7 1.4 -1 2.8"/><path d="M15.9 10.8 q1.2 1.8 -.6 3.2 q-1.6 1.3 -.9 2.6"/></g></svg><div class="ic r" style="left:72.5px;top:2px">S</div><svg class="a" style="left:81.6px;top:1.6px" width="12" height="13" viewBox="0 0 12 13"><path d="M6 .2A5.3 5.3 0 0 1 8.9 9.9V12.6H3.3V9.9A5.3 5.3 0 0 1 6 .2Z" fill="#fff"/><path d="M5.6 1.5A4.1 4.1 0 0 0 5.6 9.3Z" fill="rgba(0,70,73,.9)"/></svg><div class="tl" style="top:47.9px;letter-spacing:0.36px;">24
All 4</div></div>
<div class="c" style="left:102px;top:851px;width:99px;height:96px;background:#131316"><div class="s" style="background:#012b2d"></div><div class="n ne">1</div></div>
<div class="c" style="left:202px;top:851px;width:99px;height:96px;background:#131316"><div class="s" style="background:#012b2d"></div><div class="n ne">2</div></div>
<div class="c" style="left:302px;top:851px;width:100px;height:96px;background:#131316"><div class="s" style="background:#012b2d"></div><div class="n ne">3</div></div>
<div class="c" style="left:403px;top:851px;width:99px;height:96px;background:#131316"><div class="s" style="background:#012b2d"></div><div class="n ne">4</div></div>
<div class="c" style="left:503px;top:851px;width:99px;height:96px;background:#131316"><div class="s" style="background:#012b2d"></div><div class="n ne">5</div></div>
<div class="c" style="left:603px;top:851px;width:100px;height:96px;background:#131316"><div class="s" style="background:#012b2d"></div><div class="n ne">6</div></div>
<div class="c" style="left:704px;top:851px;width:99px;height:96px;background:#131316"><div class="s" style="background:#012b2d"></div><div class="n ne">7</div></div>
<div class="c" style="left:804px;top:851px;width:99px;height:96px;background:#131316"><div class="s" style="background:#012b2d"></div><div class="n ne">8</div></div>
<div class="c" style="left:904px;top:851px;width:100px;height:96px;background:#131316"><div class="s" style="background:#012b2d"></div><div class="n ne">9</div></div>
<div class="c" style="left:1005px;top:851px;width:96px;height:96px;background:#131316;border-radius:0 9px 9px 0"><div class="s" style="background:#012b2d"></div><div class="n ne">10</div><svg class="a" style="right:0;bottom:0" width="32" height="32" viewBox="0 0 32 32"><path d="M32 0V32H0Z" fill="#383842"/><g stroke="#000" stroke-width="2.5"><path d="M16 22L23.5 14.5"/><path d="M19.3 25.3L26.8 17.8"/><path d="M22.6 28.6L30.1 21.1"/></g></svg></div>
<div class="t" style="top:955px;height:96px;background:#a87c02"><div class="ma" style="left:4px;top:13px;color:#a87c02"><b><span>M</span></b><b><span>A</span></b></div><svg class="a" style="left:63px;top:17px" width="20" height="15" viewBox="0 0 20 15"><g fill="#eee"><rect x="1.2" y="1.7" width="2.8" height="1.25" rx=".6"/><rect x="6.3" y="1.7" width="12.8" height="1.25" rx=".6"/><rect x="1.2" y="7.7" width="2.8" height="1.25" rx=".6"/><rect x="6.3" y="7.7" width="12.8" height="1.25" rx=".6"/><rect x="1.2" y="13.7" width="2.8" height="1.25" rx=".6"/><rect x="6.3" y="13.7" width="12.8" height="1.25" rx=".6"/></g></svg><div class="a" style="left:81px;top:2px;width:12px;height:12px;border:2px solid #faf3e2;color:#fff;font-weight:700;font-size:10.4px;line-height:9.6px;text-align:center;overflow:hidden">S</div><div class="tl" style="top:55.2px;letter-spacing:0.19px;">Sequence</div></div>
<div class="c" style="left:102px;top:955px;width:99px;height:96px;background:#383842"><div class="a" style="left:0;top:0;right:0;bottom:0;border:5px solid #ffd800"></div><div class="n">1</div><svg class="a" style="right:3px;top:8px" width="13" height="13" viewBox="0 0 13 13"><g fill="#000" opacity=".75" transform="translate(-.6,.7)"><rect x="4.9" y="0" width="2.3" height="6"/><path d="M1.7 5.4H10.4L6.05 10.1Z"/><rect x=".4" y="10.3" width="11.6" height="1.4"/></g><g fill="#00ffff"><rect x="4.9" y="0" width="2.3" height="6"/><path d="M1.7 5.4H10.4L6.05 10.1Z"/><rect x=".4" y="10.3" width="11.6" height="1.4"/></g></svg><div class="l" style="top:28px;letter-spacing:-0.17px;">Look</div></div>
<div class="c" style="left:202px;top:955px;width:99px;height:96px;background:#131316"><div class="s" style="background:#3a2a06"></div><div class="n ne">2</div></div>
<div class="c" style="left:302px;top:955px;width:100px;height:96px;background:#131316"><div class="s" style="background:#3a2a06"></div><div class="n ne">3</div></div>
<div class="c" style="left:403px;top:955px;width:99px;height:96px;background:#131316"><div class="s" style="background:#3a2a06"></div><div class="n ne">4</div></div>
<div class="c" style="left:503px;top:955px;width:99px;height:96px;background:#131316"><div class="s" style="background:#3a2a06"></div><div class="n ne">5</div></div>
<div class="c" style="left:603px;top:955px;width:100px;height:96px;background:#131316"><div class="s" style="background:#3a2a06"></div><div class="n ne">6</div></div>
<div class="c" style="left:704px;top:955px;width:99px;height:96px;background:#131316"><div class="s" style="background:#3a2a06"></div><div class="n ne">7</div></div>
<div class="c" style="left:804px;top:955px;width:99px;height:96px;background:#131316"><div class="s" style="background:#3a2a06"></div><div class="n ne">8</div></div>
<div class="c" style="left:904px;top:955px;width:100px;height:96px;background:#131316"><div class="s" style="background:#3a2a06"></div><div class="n ne">9</div></div>
<div class="c" style="left:1005px;top:955px;width:96px;height:96px;background:#131316;border-radius:0 9px 9px 0"><div class="s" style="background:#3a2a06"></div><div class="n ne">10</div><svg class="a" style="right:0;bottom:0" width="32" height="32" viewBox="0 0 32 32"><path d="M32 0V32H0Z" fill="#383842"/><g stroke="#000" stroke-width="2.5"><path d="M16 22L23.5 14.5"/><path d="M19.3 25.3L26.8 17.8"/><path d="M22.6 28.6L30.1 21.1"/></g></svg></div>
<div class="a" style="left:1109px;top:3px;width:1296px;height:1048px;background:#9c9da2;border-radius:9px 9px 8px 8px"></div>
<div class="a" style="left:1113px;top:51px;width:1288px;height:996px;background:#000"></div>
<div class="ma" style="left:1113px;top:15px;color:#9c9da2"><b><span>M</span></b><b><span>A</span></b></div>
<svg class="a" style="left:1171px;top:15.6px" width="22.5" height="22.5" viewBox="0 0 22.5 22.5"><g fill="#80ff80"><circle cx="11.1" cy="1.5" r="1.5"/><path d="M3.6 5.3 C5.5 2.6 8.5 1.6 11.1 1.6 C13.7 1.6 16.7 2.6 18.7 5.3 Z"/><rect x="0" y="7" width="22.3" height="2.4" rx=".6"/><path d="M2 9.3 H20.2 V18 Q20.2 19.9 18.3 19.9 H3.9 Q2 19.9 2 18 Z"/><rect x="0" y="20.9" width="22.5" height="1.6" rx=".5"/></g><g fill="none" stroke="#9c9da2" stroke-width="1" stroke-linecap="round"><path d="M8.3 10.8 q1.2 1.8 -.6 3.2 q-1.6 1.3 -.9 2.6"/><path d="M12.2 10.2 q1.3 1.9 -.7 3.6 q-1.7 1.4 -1 2.8"/><path d="M15.9 10.8 q1.2 1.8 -.6 3.2 q-1.6 1.3 -.9 2.6"/></g></svg>
<div class="tl" style="left:1219px;top:14px;width:auto;text-align:left;font-size:19.4px;line-height:24px;letter-spacing:-0.08px;">Recipe Editor</div>
<div class="a" style="left:2213px;top:3px;width:192px;height:48px;background:#000;border-radius:0 9px 0 0"></div>
<div class="a" style="left:2214px;top:3px;width:90px;height:48px;background:#333238;color:#858585;font-size:17.6px;line-height:47px;text-align:center;letter-spacing:-.1px">CleanUp</div>
<div class="a" style="left:2305px;top:3px;width:100px;height:48px;background:#5f5f67;border-radius:0 9px 0 0;color:#ffd800;font-size:17.5px;line-height:17px;text-align:center;padding-top:10px">Edit<br>Recipe</div>
<div class="tg" style="left:2384px;top:4.3px"></div>
<div class="tb on" style="left:1113px;width:183px;">References</div>
<div class="tg" style="left:1275.8px;top:52.6px"></div>
<div class="tb on" style="left:1297px;width:183px;letter-spacing:-0.09px;">Grid</div>
<div class="tg" style="left:1459.8px;top:52.6px"></div>
<div class="tb on" style="left:1481px;width:183px;">Layers</div>
<div class="tg" style="left:1643.8px;top:52.6px"></div>
<div class="tb off" style="left:1665px;width:183px;letter-spacing:0.30px;">Shuffle</div>
<div class="tg x" style="left:1827.8px;top:52.6px"></div>
<div class="tb on" style="left:1849px;width:183px;letter-spacing:-0.45px;">X</div>
<div class="tg" style="left:2011.8px;top:52.6px"></div>
<div class="tb off" style="left:2033px;width:183px;letter-spacing:-0.92px;">Y</div>
<div class="tg x" style="left:2195.8px;top:52.6px"></div>
<div class="tb off" style="left:2217px;width:184px;">Z</div>
<div class="tg x" style="left:2379.8px;top:52.6px"></div>
<div class="a" style="left:1115px;top:93px;width:60px;height:121px;background:#383842;border-radius:8px"></div>
<div class="a" style="left:1115px;top:153px;width:60px;height:1px;background:#000"></div>
<div class="a" style="left:1132.8px;top:119px;width:24.5px;height:8px;background:#e4e4e4"></div>
<div class="a" style="left:1141px;top:110.8px;width:8px;height:24.4px;background:#e4e4e4"></div>
<div class="a" style="left:1132.8px;top:180px;width:24.5px;height:8px;background:#e4e4e4"></div>
<div class="a" style="left:1178px;top:91px;width:48px;height:65px;background:#383842"></div>
<svg class="a" style="left:1196.5px;top:117.5px" width="12" height="13" viewBox="0 0 12 13"><path d="M.5 .5L11 6.5L.5 12.5Z" fill="#000"/></svg>
<div class="hd" style="left:1226px;width:144px;background:#191919;letter-spacing:0.25px;">Name</div>
<div class="hd" style="left:1371px;width:96px;background:#1e1e1e;letter-spacing:0.21px;">Part</div>
<div class="hd" style="left:1468px;width:120px;background:#232323;letter-spacing:0.20px;">Tags</div>
<div class="hd" style="left:1589px;width:96px;background:#2e2e2e;letter-spacing:-0.07px;">Enabled</div>
<div class="hd" style="left:1686px;width:120px;background:#191919;letter-spacing:0.18px;">Selection</div>
<div class="hd" style="left:1807px;width:96px;background:#333333;letter-spacing:0.18px;">Selection
Mode</div>
<div class="hd" style="left:1904px;width:120px;background:#191919;letter-spacing:0.09px;">Values</div>
<div class="hd" style="left:2025px;width:120px;background:#1e1e1e;letter-spacing:0.52px;">MAtricks</div>
<div class="hd" style="left:2146px;width:120px;background:#191919;letter-spacing:0.18px;">Filter</div>
<div class="hd" style="left:2267px;width:96px;background:#333333;">Fade
From X</div>
<div class="a" style="left:2364px;top:91px;width:37px;height:65px;background:#1e1e1e;overflow:hidden"><div class="hd" style="left:0;top:0;width:96px">Fade
To X</div></div>
<div class="a" style="left:1178px;top:156.1px;width:1223px;height:1.2px;background:#f0c000"></div>
<div class="a" style="left:1178px;top:188.8px;width:1223px;height:1.2px;background:#f0c000"></div>
<div class="a" style="left:1178px;top:157.5px;width:48px;height:31px;background:#383842"></div>
<svg class="a" style="left:1194.5px;top:167.5px" width="13" height="11" viewBox="0 0 13 11"><path d="M.4 .5H12.6L6.5 10.8Z" fill="#000"/></svg>
<div class="rw" style="left:1371px;top:157.5px;width:96px;height:31px;background:#28272f;color:#7a7a7a;text-align:center;line-height:30px">0</div>
<div class="rw" style="left:1250px;top:190px;width:120px;background:#383842;letter-spacing:-0.05px;">New Recipe</div>
<div class="rw" style="left:1178px;top:223px;width:192px;background:#383842;padding-left:48px;letter-spacing:0.12px;">Part 1</div>
<svg class="a" style="left:1196.5px;top:233px" width="12" height="13" viewBox="0 0 12 13"><path d="M.5 .5L11 6.5L.5 12.5Z" fill="#000"/></svg>
<div class="rw" style="left:1371px;top:223px;width:96px;background:#222127;text-align:center">1</div>
<div class="rw" style="left:1178px;top:256px;width:192px;background:#383842;padding-left:48px;letter-spacing:0.10px;">New Prog Part</div>
<div class="rw" style="left:1221px;top:152px;width:154px;height:42px;border:5px solid #fff;background:#13124c;color:#80ff80;line-height:31px;padding-left:.5px;letter-spacing:0.10px;">Part Zero</div>
<div class="a" style="left:1179px;top:1045px;width:443px;height:2px;background:#3c3c44"></div>
<svg class="a" style="left:1370px;top:1030px" width="60" height="18" viewBox="0 0 60 18"><path d="M2 17 C7 17 8 12 10.5 7.5 C12.5 3.5 13.5 1 17 1 H43 C46.5 1 47.5 3.5 49.5 7.5 C52 12 53 17 58 17 Z" fill="#383842"/><g fill="#000"><rect x="25.2" y="3" width="1.7" height="12"/><rect x="29.2" y="3" width="1.7" height="12"/><rect x="33.2" y="3" width="1.7" height="12"/></g></svg>
<svg class="a" style="left:2372px;top:1018px" width="33" height="33" viewBox="0 0 33 33"><path d="M33 0V26Q33 33 26 33H0Z" fill="#6b6b73"/><g stroke="#000" stroke-width="2"><path d="M15 24L23.5 15.5"/><path d="M18 27L26.5 18.5"/><path d="M21 30L29.5 21.5"/></g></svg>
</div></body></html>
